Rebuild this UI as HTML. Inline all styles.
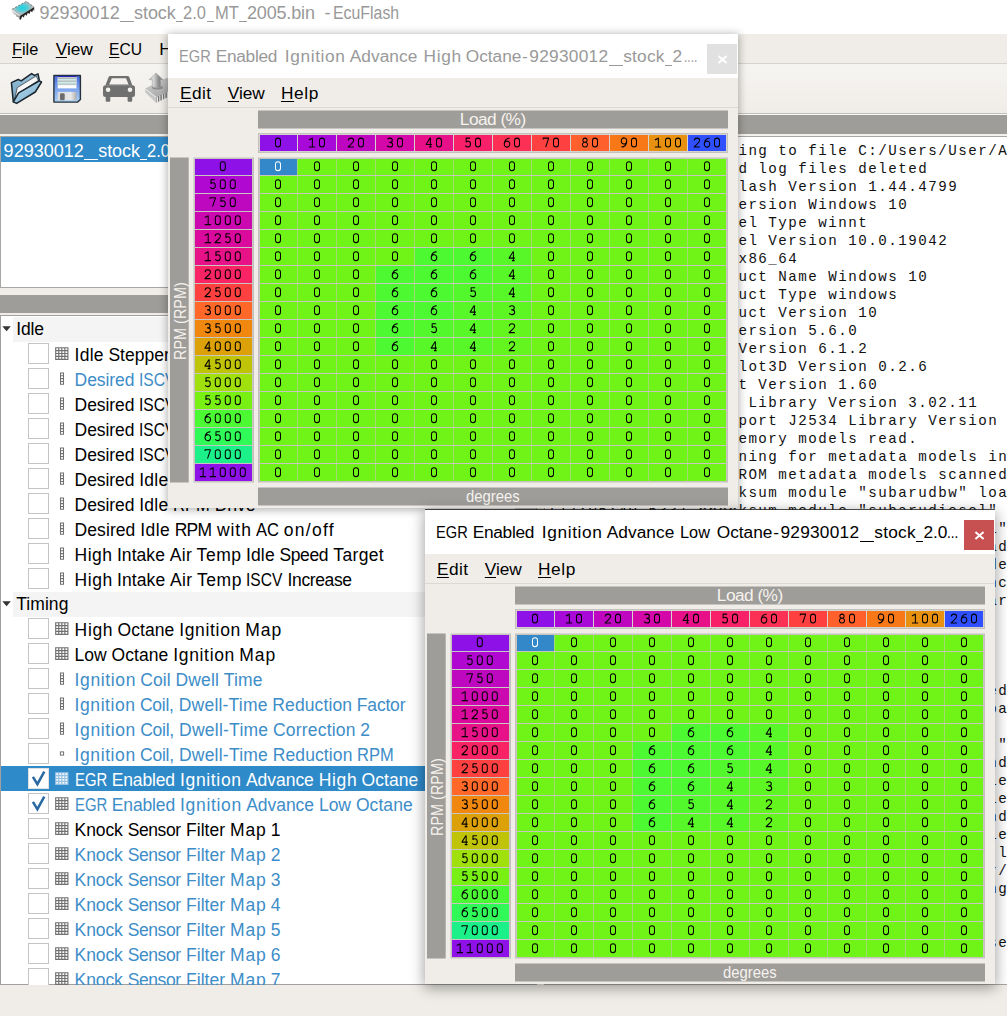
<!DOCTYPE html>
<html><head><meta charset="utf-8"><title>EcuFlash</title>
<style>
html,body{margin:0;padding:0}
body{width:1007px;height:1016px;position:relative;overflow:hidden;background:#fff;font-family:"Liberation Sans", sans-serif}
.b{position:absolute}
.x{position:absolute;white-space:pre;line-height:1}
u{text-decoration-thickness:1.2px;text-underline-offset:2px}
</style></head><body>
<svg width=0 height=0 style='position:absolute'><defs><path id='d0' d='M0,2.3A2.7,2.3 0 0 1 5.4,2.3V6.3A2.7,2.3 0 0 1 0,6.3Z' transform='translate(0.2,0) scale(0.925,1.035)'/><path id='d1' d='M-0.6,1.7L3.1,0.1V8.6M-0.6,8.6H6.1' transform='translate(0.2,0) scale(0.925,1.035)'/><path id='d2' d='M-0.2,2.4A2.9,2.4 0 0 1 5.6,2.4C5.6,4.3 2.4,5.8 -0.4,8.6H5.8' transform='translate(0.2,0) scale(0.925,1.035)'/><path id='d3' d='M-0.1,1C0.7,0.3 1.6,0 2.7,0A2.5,2.05 0 0 1 2.7,4.1H1.9M2.7,4.1A2.9,2.25 0 0 1 2.7,8.6C1.4,8.6 0.4,8.2 -0.4,7.4' transform='translate(0.2,0) scale(0.925,1.035)'/><path id='d4' d='M4.2,8.6V0H3.8L-0.4,6.2H5.8M2.6,8.6H5.6' transform='translate(0.2,0) scale(0.925,1.035)'/><path id='d5' d='M5,0H0.7V3.7C1.4,3.2 2,3 2.7,3A2.7,2.8 0 0 1 2.7,8.6C1.5,8.6 0.6,8.2 -0.2,7.4' transform='translate(0.2,0) scale(0.925,1.035)'/><path id='d6' d='M5.5,0.2C2.4,-0.3 -0.3,2.3 -0.3,5.6A3,3 0 0 0 5.7,5.9A2.9,2.6 0 0 0 -0.2,5.2' transform='translate(0.2,0) scale(0.925,1.035)'/><path id='d7' d='M-0.3,1.3V0H5.6L2.4,8.6' transform='translate(0.2,0) scale(0.925,1.035)'/><path id='d8' d='M2.7,0A2.3,2 0 1 1 2.69,0ZM2.7,4A2.75,2.3 0 1 1 2.69,4Z' transform='translate(0.2,0) scale(0.925,1.035)'/><path id='d9' d='M-0.1,8.4C3,8.9 5.7,6.3 5.7,3A3,3 0 0 0 -0.3,2.7A2.9,2.6 0 0 0 5.6,3.4' transform='translate(0.2,0) scale(0.925,1.035)'/></defs></svg>
<div class=b style='left:0px;top:34px;width:1007px;height:29px;background:#f0ede8;'></div>
<div class=b style='left:0px;top:63px;width:1007px;height:1px;background:#d6d3ce;'></div>
<div class=b style='left:0px;top:64px;width:1007px;height:49px;background:linear-gradient(#f6f4f1,#f0ede8);'></div>
<div class=b style='left:0px;top:112.5px;width:1007px;height:1px;background:#c2bfba;'></div>
<div class=b style='left:0px;top:113.5px;width:1007px;height:1.5px;background:#fbfaf8;'></div>
<div class=b style='left:0px;top:115px;width:1007px;height:18.5px;background:#9e9d99;'></div>
<div class=b style='left:0px;top:133.5px;width:1007px;height:2px;background:#f4f1ed;'></div>
<div class=b style='left:0px;top:135.5px;width:1007px;height:880.5px;background:#f0ede8;'></div>
<div class=b style='left:0px;top:135.5px;width:537px;height:152px;background:#fff;border:1px solid #a8a6a2;border-top-color:#a9a6a1;box-sizing:border-box'></div>
<div class=b style='left:1px;top:137px;width:535px;height:24.5px;background:#2f8ac9;'></div>
<div class=b style='left:0px;top:294.5px;width:537px;height:18.5px;background:#9e9d99;'></div>
<div class=b style='left:0px;top:315px;width:537px;height:670px;background:#fff;border:1px solid #a0a0a0;box-sizing:border-box'></div>
<div class=b style='left:515px;top:316px;width:21px;height:668px;background:#f0f0f0;'></div>
<div class=b style='left:515px;top:360px;width:21px;height:330px;background:#cdcdcd;'></div>
<div class=b style='left:544px;top:135.5px;width:463px;height:849.5px;background:#fff;border:1px solid #a8a6a2;border-top-color:#a9a6a1;border-right:none;box-sizing:border-box'></div>
<svg class=b style="left:8px;top:0px" width="30" height="22" viewBox="0 0 30 22">
<defs><radialGradient id="cg" cx="0.48" cy="0.45" r="0.5"><stop offset="0" stop-color="#14d6e6"/><stop offset="0.45" stop-color="#58cad6"/><stop offset="0.85" stop-color="#b4bcbc"/><stop offset="1" stop-color="#c0c0c0"/></radialGradient>
<linearGradient id="lg" x1="0" x2="1"><stop offset="0" stop-color="#e8e8e8"/><stop offset="1" stop-color="#888"/></linearGradient></defs>
<polygon points="3.7,9.5 18.4,1.2 26.2,7.1 11.7,15.9" fill="url(#cg)"/>
<polygon points="3.7,9.5 11.7,15.9 11.7,19.6 10.2,16.9 8.6,17 7.4,14.6 5.9,14.8 4.8,12.5 3.7,12.6" fill="url(#lg)"/>
<polygon points="11.7,15.9 26.2,7.1 26.2,10.9 25.2,9.6 24.2,12.3 22.6,11 21.4,14 19.8,12.7 18.6,15.7 17,14.4 15.8,17.4 14.2,16.2 13,19.4 11.7,19.8" fill="#262626"/>
<path d="M3.9,9.4 18.4,1.4 26,7.1" fill="none" stroke="#707070" stroke-width="0.9" stroke-dasharray="2.1 1.5"/>
<path d="M4.4,10.2 L11.5,15.9" stroke="#f0f0f0" stroke-width="0.9"/>
</svg>
<span class=x style='left:39.40px;top:3.66px;font-size:18px;color:#999;letter-spacing:0.029px;'>92930012</span>
<span class=x style='left:134.00px;top:3.66px;font-size:18px;color:#999;letter-spacing:-0.054px;'>stock</span>
<span class=x style='left:183.10px;top:3.66px;font-size:18px;color:#999;letter-spacing:0.000px;transform:scaleX(0.9149);transform-origin:0 0;'>2.0</span>
<span class=x style='left:215.20px;top:3.66px;font-size:18px;color:#999;letter-spacing:0.000px;transform:scaleX(0.9192);transform-origin:0 0;'>MT</span>
<span class=x style='left:246.90px;top:3.66px;font-size:18px;color:#999;letter-spacing:-0.140px;'>2005.bin</span>
<span class=x style='left:324.40px;top:3.66px;font-size:18px;color:#999;letter-spacing:0.000px;'>-</span>
<span class=x style='left:332.70px;top:3.66px;font-size:18px;color:#999;letter-spacing:0.000px;transform:scaleX(0.8821);transform-origin:0 0;'>EcuFlash</span>
<div class=b style='left:119.5px;top:20.799999999999997px;width:14.599999999999994px;height:0.9px;background:#999;'></div>
<div class=b style='left:175.5px;top:20.799999999999997px;width:7.800000000000011px;height:0.9px;background:#999;'></div>
<div class=b style='left:206.5px;top:20.799999999999997px;width:7.800000000000011px;height:0.9px;background:#999;'></div>
<div class=b style='left:239.3px;top:20.799999999999997px;width:7.699999999999989px;height:0.9px;background:#999;'></div>
<span class=x style='left:12.20px;top:40.96px;font-size:17.3px;color:#000;letter-spacing:0.000px;transform:scaleX(0.9440);transform-origin:0 0;'><u>F</u>ile</span>
<span class=x style='left:55.80px;top:40.96px;font-size:17.3px;color:#000;letter-spacing:-0.052px;'><u>V</u>iew</span>
<span class=x style='left:108.80px;top:40.96px;font-size:17.3px;color:#000;letter-spacing:0.000px;transform:scaleX(0.9041);transform-origin:0 0;'><u>E</u>CU</span>
<span class=x style='left:159.20px;top:40.96px;font-size:17.3px;color:#000;letter-spacing:0.251px;'>Help</span>
<svg class=b style="left:8px;top:70px" width="165" height="38" viewBox="8 70 165 38">
<defs>
<linearGradient id="fb" x1="0" y1="0" x2="0" y2="1"><stop offset="0" stop-color="#9cc4dc"/><stop offset="1" stop-color="#6c9cbc"/></linearGradient>
<linearGradient id="ff" x1="0" y1="0" x2="1" y2="1"><stop offset="0" stop-color="#b4d8ec"/><stop offset="1" stop-color="#7cb0d0"/></linearGradient>
<linearGradient id="fl" x1="0" y1="0" x2="0" y2="1"><stop offset="0" stop-color="#4468e0"/><stop offset="0.5" stop-color="#7ca4ec"/><stop offset="1" stop-color="#a8d0f4"/></linearGradient>
<linearGradient id="sh" x1="0" y1="0" x2="1" y2="0"><stop offset="0" stop-color="#d8d8d8"/><stop offset="0.7" stop-color="#e8e8e8"/><stop offset="1" stop-color="#b0b0b0"/></linearGradient>
<linearGradient id="ar" x1="0" y1="0" x2="1" y2="0"><stop offset="0" stop-color="#b4b4b4"/><stop offset="0.3" stop-color="#d8d8d8"/><stop offset="0.7" stop-color="#868686"/><stop offset="1" stop-color="#a4a4a4"/></linearGradient>
<linearGradient id="ch" x1="0" y1="0" x2="1" y2="1"><stop offset="0" stop-color="#d4d4d4"/><stop offset="1" stop-color="#9a9a9a"/></linearGradient>
</defs>
<!-- folder -->
<path d="M11.4,82.6 L18.2,79.5 L21.2,80.9 L31.6,73.6 L34.4,75.4 L38,73.9 L39.3,80.2 L18,94 L13.3,101.8 Z" fill="url(#fb)" stroke="#1c262e" stroke-width="1.5" stroke-linejoin="round"/>
<path d="M17.3,87.6 L36.2,75.9 L38.3,80.5 L18.6,93.2 L14.6,99.6 Z" fill="#f6f6f6" stroke="#3a4248" stroke-width="0.8" stroke-linejoin="round"/>
<path d="M13.3,101.8 L18.6,92.9 L39.4,80.8 L41.5,82 L35.3,92 L16.6,103.4 Z" fill="url(#ff)" stroke="#1c262e" stroke-width="1.5" stroke-linejoin="round"/>
<!-- floppy -->
<path d="M53.9,75.5 H80.4 V99.5 L77.7,102.1 H53.9 Z" fill="url(#fl)" stroke="#26303c" stroke-width="1.4" stroke-linejoin="round"/>
<rect x="57.7" y="76.6" width="18.8" height="11.8" fill="#fcfcfc"/>
<rect x="57.7" y="77.2" width="18.8" height="1.9" fill="#b4b8b8"/><rect x="57.7" y="80.2" width="18.8" height="1.9" fill="#b8c0c0"/><rect x="57.7" y="83.2" width="18.8" height="1.9" fill="#b8c8c8"/>
<rect x="57.7" y="79.1" width="18.8" height="1.1" fill="#c8ecec"/><rect x="57.7" y="82.1" width="18.8" height="1.1" fill="#c8ecec"/>
<rect x="57.7" y="75.9" width="18.8" height="1.1" fill="#2828b8"/>
<rect x="57.7" y="91.9" width="18.8" height="8.4" fill="url(#sh)"/>
<rect x="60" y="93.3" width="4.7" height="7" rx="1.4" fill="#6c6c6c"/>
<!-- car -->
<g fill="#707070">
<path d="M110.2,76 H127.6 Q128.8,76 129.3,77.2 L132.4,85.6 H105.4 L108.5,77.2 Q109,76 110.2,76 Z M111.8,78.2 L109.2,84.6 H128.6 L126,78.2 Z" fill-rule="evenodd"/>
<rect x="103" y="85.2" width="32" height="11.8" rx="2.5"/>
<rect x="105.7" y="95" width="4.6" height="6.7" rx="1"/>
<rect x="127.6" y="95" width="4.6" height="6.7" rx="1"/>
</g>
<circle cx="108.1" cy="89.8" r="2.3" fill="#f4f2ee"/><circle cx="130" cy="89.8" r="2.3" fill="#f4f2ee"/>
<!-- chip w/ arrow -->
<polygon points="145.1,88.5 167,77.8 178,86.4 156.1,97.1" fill="url(#ch)"/>
<polygon points="145.1,88.5 156.1,97.1 156.1,102.8 145.1,92.2" fill="#c6c6c6"/>
<path d="M145.3,88.9 L156.1,97.4" stroke="#ececec" stroke-width="1"/>
<polygon points="156.1,97.1 178,86.4 178,92 156.1,102.8" fill="#9a9a9a"/>
<path d="M157.4,97v5M159.9,95.8v5.4M162.4,94.6v5.4M164.9,93.4v5.4M167.4,92.2v5.4" stroke="#f2f2f2" stroke-width="1"/>
<path d="M158.6,96.4v5.2M161.1,95.2v5.2M163.6,94v5.2M166.1,92.8v5.2" stroke="#6e6e6e" stroke-width="0.9"/>
<ellipse cx="157.4" cy="87.6" rx="5.4" ry="2" fill="#8c8c8c"/>
<path d="M155.9,72.9 L163.4,79.9 H160.7 V86.8 Q156.6,89 152.2,86.8 V79.7 H149.1 Z" fill="url(#ar)" stroke="#9c9c9c" stroke-width="0.5"/>
</svg>
<span class=x style='left:3.60px;top:141.76px;font-size:18px;color:#fff;letter-spacing:0.029px;'>92930012</span>
<span class=x style='left:98.20px;top:141.76px;font-size:18px;color:#fff;letter-spacing:-0.054px;'>stock</span>
<span class=x style='left:147.30px;top:141.76px;font-size:18px;color:#fff;letter-spacing:0.000px;transform:scaleX(0.9149);transform-origin:0 0;'>2.0</span>
<div class=b style='left:83.7px;top:159.3px;width:14.599999999999994px;height:0.9px;background:#fff;'></div>
<div class=b style='left:139.7px;top:159.3px;width:7.800000000000011px;height:0.9px;background:#fff;'></div>
<div class=b style='left:1px;top:316px;width:514px;height:668.5px;overflow:hidden'><div class=b style='left:-1px;top:-316px'>
<div class=b style='left:13px;top:316.5px;width:502px;height:25px;background:#f4f4f4;'></div>
<svg class=b style='left:2px;top:325.5px' width=10 height=6><polygon points='0.3,0.3 8.8,0.3 4.55,5.3' fill='#333'/></svg>
<span class=x style='left:16.20px;top:321.29px;font-size:17.5px;color:#000;letter-spacing:-0.140px;'>Idle</span>
<div class=b style='left:28.2px;top:343.3px;width:20.6px;height:20.6px;background:#fff;border:1px solid #c4c4c4;box-sizing:border-box'></div>
<svg class=b style='left:55px;top:347.0px' width=14 height=14><path d='M0.7,0.7h12.2v11.6h-12.2z M3.75,0.7v11.6 M6.8,0.7v11.6 M9.85,0.7v11.6 M0.7,3.6h12.2 M0.7,6.5h12.2 M0.7,9.4h12.2' fill='#fff' stroke='#707070' stroke-width='1.15'/></svg>
<span class=x style='left:74.60px;top:346.69px;font-size:17.5px;color:#000;letter-spacing:0.227px;'>Idle</span>
<span class=x style='left:108.39px;top:346.69px;font-size:17.5px;color:#000;letter-spacing:0.018px;'>Stepper</span>
<span class=x style='left:174.68px;top:346.69px;font-size:17.5px;color:#000;letter-spacing:1.111px;'>Motor</span>
<span class=x style='left:228.75px;top:346.69px;font-size:17.5px;color:#000;letter-spacing:-0.455px;'>Steps</span>
<div class=b style='left:28.2px;top:368.3px;width:20.6px;height:20.6px;background:#fff;border:1px solid #c4c4c4;box-sizing:border-box'></div>
<svg class=b style='left:59px;top:372.0px' width=6 height=14><path d='M1.5,0.9h3v11.4h-3z M1.5,3.75h3 M1.5,6.6h3 M1.5,9.45h3' fill='#fff' stroke='#707070' stroke-width='1.05'/></svg>
<span class=x style='left:74.60px;top:371.69px;font-size:17.5px;color:#3d8dc8;letter-spacing:-0.089px;'>Desired</span>
<span class=x style='left:139.27px;top:371.69px;font-size:17.5px;color:#3d8dc8;letter-spacing:0.000px;transform:scaleX(0.8903);transform-origin:0 0;'>ISCV</span>
<span class=x style='left:180.54px;top:371.69px;font-size:17.5px;color:#3d8dc8;letter-spacing:0.429px;'>Duty</span>
<span class=x style='left:222.70px;top:371.69px;font-size:17.5px;color:#3d8dc8;letter-spacing:0.000px;'>A</span>
<div class=b style='left:28.2px;top:393.3px;width:20.6px;height:20.6px;background:#fff;border:1px solid #c4c4c4;box-sizing:border-box'></div>
<svg class=b style='left:59px;top:397.0px' width=6 height=14><path d='M1.5,0.9h3v11.4h-3z M1.5,3.75h3 M1.5,6.6h3 M1.5,9.45h3' fill='#fff' stroke='#707070' stroke-width='1.05'/></svg>
<span class=x style='left:74.60px;top:396.69px;font-size:17.5px;color:#000;letter-spacing:-0.089px;'>Desired</span>
<span class=x style='left:139.27px;top:396.69px;font-size:17.5px;color:#000;letter-spacing:0.000px;transform:scaleX(0.8903);transform-origin:0 0;'>ISCV</span>
<span class=x style='left:180.54px;top:396.69px;font-size:17.5px;color:#000;letter-spacing:0.429px;'>Duty</span>
<span class=x style='left:222.70px;top:396.69px;font-size:17.5px;color:#000;letter-spacing:0.000px;'>B</span>
<div class=b style='left:28.2px;top:418.3px;width:20.6px;height:20.6px;background:#fff;border:1px solid #c4c4c4;box-sizing:border-box'></div>
<svg class=b style='left:59px;top:422.0px' width=6 height=14><path d='M1.5,0.9h3v11.4h-3z M1.5,3.75h3 M1.5,6.6h3 M1.5,9.45h3' fill='#fff' stroke='#707070' stroke-width='1.05'/></svg>
<span class=x style='left:74.60px;top:421.69px;font-size:17.5px;color:#000;letter-spacing:-0.089px;'>Desired</span>
<span class=x style='left:139.27px;top:421.69px;font-size:17.5px;color:#000;letter-spacing:0.000px;transform:scaleX(0.8903);transform-origin:0 0;'>ISCV</span>
<span class=x style='left:180.54px;top:421.69px;font-size:17.5px;color:#000;letter-spacing:0.429px;'>Duty</span>
<span class=x style='left:222.70px;top:421.69px;font-size:17.5px;color:#000;letter-spacing:0.000px;'>C</span>
<div class=b style='left:28.2px;top:443.3px;width:20.6px;height:20.6px;background:#fff;border:1px solid #c4c4c4;box-sizing:border-box'></div>
<svg class=b style='left:59px;top:447.0px' width=6 height=14><path d='M1.5,0.9h3v11.4h-3z M1.5,3.75h3 M1.5,6.6h3 M1.5,9.45h3' fill='#fff' stroke='#707070' stroke-width='1.05'/></svg>
<span class=x style='left:74.60px;top:446.69px;font-size:17.5px;color:#000;letter-spacing:-0.089px;'>Desired</span>
<span class=x style='left:139.27px;top:446.69px;font-size:17.5px;color:#000;letter-spacing:0.000px;transform:scaleX(0.8903);transform-origin:0 0;'>ISCV</span>
<span class=x style='left:180.54px;top:446.69px;font-size:17.5px;color:#000;letter-spacing:0.429px;'>Duty</span>
<span class=x style='left:222.70px;top:446.69px;font-size:17.5px;color:#000;letter-spacing:0.000px;'>D</span>
<div class=b style='left:28.2px;top:468.3px;width:20.6px;height:20.6px;background:#fff;border:1px solid #c4c4c4;box-sizing:border-box'></div>
<svg class=b style='left:59px;top:472.0px' width=6 height=14><path d='M1.5,0.9h3v11.4h-3z M1.5,3.75h3 M1.5,6.6h3 M1.5,9.45h3' fill='#fff' stroke='#707070' stroke-width='1.05'/></svg>
<span class=x style='left:74.60px;top:471.69px;font-size:17.5px;color:#000;letter-spacing:-0.089px;'>Desired</span>
<span class=x style='left:139.27px;top:471.69px;font-size:17.5px;color:#000;letter-spacing:0.227px;'>Idle</span>
<span class=x style='left:173.06px;top:471.69px;font-size:17.5px;color:#000;letter-spacing:0.000px;transform:scaleX(0.9437);transform-origin:0 0;'>RPM</span>
<span class=x style='left:214.65px;top:471.69px;font-size:17.5px;color:#000;letter-spacing:0.339px;'>Neutral</span>
<div class=b style='left:28.2px;top:493.3px;width:20.6px;height:20.6px;background:#fff;border:1px solid #c4c4c4;box-sizing:border-box'></div>
<svg class=b style='left:59px;top:497.0px' width=6 height=14><path d='M1.5,0.9h3v11.4h-3z M1.5,3.75h3 M1.5,6.6h3 M1.5,9.45h3' fill='#fff' stroke='#707070' stroke-width='1.05'/></svg>
<span class=x style='left:74.60px;top:496.69px;font-size:17.5px;color:#000;letter-spacing:-0.089px;'>Desired</span>
<span class=x style='left:139.27px;top:496.69px;font-size:17.5px;color:#000;letter-spacing:0.227px;'>Idle</span>
<span class=x style='left:173.06px;top:496.69px;font-size:17.5px;color:#000;letter-spacing:0.000px;transform:scaleX(0.9437);transform-origin:0 0;'>RPM</span>
<span class=x style='left:214.65px;top:496.69px;font-size:17.5px;color:#000;letter-spacing:0.022px;'>Drive</span>
<div class=b style='left:28.2px;top:518.3px;width:20.6px;height:20.6px;background:#fff;border:1px solid #c4c4c4;box-sizing:border-box'></div>
<svg class=b style='left:59px;top:522.0px' width=6 height=14><path d='M1.5,0.9h3v11.4h-3z M1.5,3.75h3 M1.5,6.6h3 M1.5,9.45h3' fill='#fff' stroke='#707070' stroke-width='1.05'/></svg>
<span class=x style='left:74.60px;top:521.69px;font-size:17.5px;color:#000;letter-spacing:0.076px;'>Desired</span>
<span class=x style='left:140.34px;top:521.69px;font-size:17.5px;color:#000;letter-spacing:0.386px;'>Idle</span>
<span class=x style='left:174.69px;top:521.69px;font-size:17.5px;color:#000;letter-spacing:-0.792px;'>RPM</span>
<span class=x style='left:216.97px;top:521.69px;font-size:17.5px;color:#000;letter-spacing:0.930px;'>with</span>
<span class=x style='left:255.86px;top:521.69px;font-size:17.5px;color:#000;letter-spacing:0.000px;transform:scaleX(0.9434);transform-origin:0 0;'>AC</span>
<span class=x style='left:283.76px;top:521.69px;font-size:17.5px;color:#000;letter-spacing:1.294px;'>on/off</span>
<div class=b style='left:28.2px;top:543.3px;width:20.6px;height:20.6px;background:#fff;border:1px solid #c4c4c4;box-sizing:border-box'></div>
<svg class=b style='left:59px;top:547.0px' width=6 height=14><path d='M1.5,0.9h3v11.4h-3z M1.5,3.75h3 M1.5,6.6h3 M1.5,9.45h3' fill='#fff' stroke='#707070' stroke-width='1.05'/></svg>
<span class=x style='left:74.60px;top:546.69px;font-size:17.5px;color:#000;letter-spacing:0.481px;'>High</span>
<span class=x style='left:116.92px;top:546.69px;font-size:17.5px;color:#000;letter-spacing:0.064px;'>Intake</span>
<span class=x style='left:169.79px;top:546.69px;font-size:17.5px;color:#000;letter-spacing:0.284px;'>Air</span>
<span class=x style='left:196.62px;top:546.69px;font-size:17.5px;color:#000;letter-spacing:0.533px;'>Temp</span>
<span class=x style='left:245.89px;top:546.69px;font-size:17.5px;color:#000;letter-spacing:0.189px;'>Idle</span>
<span class=x style='left:279.55px;top:546.69px;font-size:17.5px;color:#000;letter-spacing:-0.415px;'>Speed</span>
<span class=x style='left:333.37px;top:546.69px;font-size:17.5px;color:#000;letter-spacing:0.339px;'>Target</span>
<div class=b style='left:28.2px;top:568.3px;width:20.6px;height:20.6px;background:#fff;border:1px solid #c4c4c4;box-sizing:border-box'></div>
<svg class=b style='left:59px;top:572.0px' width=6 height=14><path d='M1.5,0.9h3v11.4h-3z M1.5,3.75h3 M1.5,6.6h3 M1.5,9.45h3' fill='#fff' stroke='#707070' stroke-width='1.05'/></svg>
<span class=x style='left:74.60px;top:571.69px;font-size:17.5px;color:#000;letter-spacing:0.514px;'>High</span>
<span class=x style='left:117.03px;top:571.69px;font-size:17.5px;color:#000;letter-spacing:0.089px;'>Intake</span>
<span class=x style='left:170.04px;top:571.69px;font-size:17.5px;color:#000;letter-spacing:0.312px;'>Air</span>
<span class=x style='left:196.94px;top:571.69px;font-size:17.5px;color:#000;letter-spacing:0.572px;'>Temp</span>
<span class=x style='left:246.34px;top:571.69px;font-size:17.5px;color:#000;letter-spacing:0.000px;transform:scaleX(0.8891);transform-origin:0 0;'>ISCV</span>
<span class=x style='left:287.55px;top:571.69px;font-size:17.5px;color:#000;letter-spacing:-0.368px;'>Increase</span>
<div class=b style='left:13px;top:591.5px;width:502px;height:25px;background:#f4f4f4;'></div>
<svg class=b style='left:2px;top:600.5px' width=10 height=6><polygon points='0.3,0.3 8.8,0.3 4.55,5.3' fill='#333'/></svg>
<span class=x style='left:16.20px;top:596.29px;font-size:17.5px;color:#000;letter-spacing:0.068px;'>Timing</span>
<div class=b style='left:28.2px;top:618.3px;width:20.6px;height:20.6px;background:#fff;border:1px solid #c4c4c4;box-sizing:border-box'></div>
<svg class=b style='left:55px;top:622.0px' width=14 height=14><path d='M0.7,0.7h12.2v11.6h-12.2z M3.75,0.7v11.6 M6.8,0.7v11.6 M9.85,0.7v11.6 M0.7,3.6h12.2 M0.7,6.5h12.2 M0.7,9.4h12.2' fill='#fff' stroke='#707070' stroke-width='1.15'/></svg>
<span class=x style='left:74.60px;top:621.69px;font-size:17.5px;color:#000;letter-spacing:0.645px;'>High</span>
<span class=x style='left:117.47px;top:621.69px;font-size:17.5px;color:#000;letter-spacing:0.071px;'>Octane</span>
<span class=x style='left:179.20px;top:621.69px;font-size:17.5px;color:#000;letter-spacing:0.671px;'>Ignition</span>
<span class=x style='left:245.27px;top:621.69px;font-size:17.5px;color:#000;letter-spacing:0.944px;'>Map</span>
<div class=b style='left:28.2px;top:643.3px;width:20.6px;height:20.6px;background:#fff;border:1px solid #c4c4c4;box-sizing:border-box'></div>
<svg class=b style='left:55px;top:647.0px' width=14 height=14><path d='M0.7,0.7h12.2v11.6h-12.2z M3.75,0.7v11.6 M6.8,0.7v11.6 M9.85,0.7v11.6 M0.7,3.6h12.2 M0.7,6.5h12.2 M0.7,9.4h12.2' fill='#fff' stroke='#707070' stroke-width='1.15'/></svg>
<span class=x style='left:74.60px;top:646.69px;font-size:17.5px;color:#000;letter-spacing:-0.049px;'>Low</span>
<span class=x style='left:111.54px;top:646.69px;font-size:17.5px;color:#000;letter-spacing:0.066px;'>Octane</span>
<span class=x style='left:173.24px;top:646.69px;font-size:17.5px;color:#000;letter-spacing:0.667px;'>Ignition</span>
<span class=x style='left:239.28px;top:646.69px;font-size:17.5px;color:#000;letter-spacing:0.936px;'>Map</span>
<div class=b style='left:28.2px;top:668.3px;width:20.6px;height:20.6px;background:#fff;border:1px solid #c4c4c4;box-sizing:border-box'></div>
<svg class=b style='left:59px;top:672.0px' width=6 height=14><path d='M1.5,0.9h3v11.4h-3z M1.5,3.75h3 M1.5,6.6h3 M1.5,9.45h3' fill='#fff' stroke='#707070' stroke-width='1.05'/></svg>
<span class=x style='left:74.60px;top:671.69px;font-size:17.5px;color:#3d8dc8;letter-spacing:0.622px;'>Ignition</span>
<span class=x style='left:140.30px;top:671.69px;font-size:17.5px;color:#3d8dc8;letter-spacing:0.026px;'>Coil</span>
<span class=x style='left:175.44px;top:671.69px;font-size:17.5px;color:#3d8dc8;letter-spacing:0.182px;'>Dwell</span>
<span class=x style='left:223.87px;top:671.69px;font-size:17.5px;color:#3d8dc8;letter-spacing:0.092px;'>Time</span>
<div class=b style='left:28.2px;top:693.3px;width:20.6px;height:20.6px;background:#fff;border:1px solid #c4c4c4;box-sizing:border-box'></div>
<svg class=b style='left:59px;top:697.0px' width=6 height=14><path d='M1.5,0.9h3v11.4h-3z M1.5,3.75h3 M1.5,6.6h3 M1.5,9.45h3' fill='#fff' stroke='#707070' stroke-width='1.05'/></svg>
<span class=x style='left:74.60px;top:696.69px;font-size:17.5px;color:#3d8dc8;letter-spacing:0.574px;'>Ignition</span>
<span class=x style='left:139.94px;top:696.69px;font-size:17.5px;color:#3d8dc8;letter-spacing:-0.270px;'>Coil,</span>
<span class=x style='left:178.75px;top:696.69px;font-size:17.5px;color:#3d8dc8;letter-spacing:0.208px;'>Dwell-Time</span>
<span class=x style='left:272.36px;top:696.69px;font-size:17.5px;color:#3d8dc8;letter-spacing:0.099px;'>Reduction</span>
<span class=x style='left:356.85px;top:696.69px;font-size:17.5px;color:#3d8dc8;letter-spacing:-0.192px;'>Factor</span>
<div class=b style='left:28.2px;top:718.3px;width:20.6px;height:20.6px;background:#fff;border:1px solid #c4c4c4;box-sizing:border-box'></div>
<svg class=b style='left:59px;top:722.0px' width=6 height=14><path d='M1.5,0.9h3v11.4h-3z M1.5,3.75h3 M1.5,6.6h3 M1.5,9.45h3' fill='#fff' stroke='#707070' stroke-width='1.05'/></svg>
<span class=x style='left:74.60px;top:721.69px;font-size:17.5px;color:#3d8dc8;letter-spacing:0.601px;'>Ignition</span>
<span class=x style='left:140.14px;top:721.69px;font-size:17.5px;color:#3d8dc8;letter-spacing:-0.244px;'>Coil,</span>
<span class=x style='left:179.08px;top:721.69px;font-size:17.5px;color:#3d8dc8;letter-spacing:0.238px;'>Dwell-Time</span>
<span class=x style='left:272.97px;top:721.69px;font-size:17.5px;color:#3d8dc8;letter-spacing:0.196px;'>Correction</span>
<span class=x style='left:360.37px;top:721.69px;font-size:17.5px;color:#3d8dc8;letter-spacing:0.000px;'>2</span>
<div class=b style='left:28.2px;top:743.3px;width:20.6px;height:20.6px;background:#fff;border:1px solid #c4c4c4;box-sizing:border-box'></div>
<svg class=b style='left:59px;top:750.5px' width=6 height=6><rect x='1.4' y='0.9' width='3.2' height='3.2' fill='#fff' stroke='#707070' stroke-width='1'/></svg>
<span class=x style='left:74.60px;top:746.69px;font-size:17.5px;color:#3d8dc8;letter-spacing:0.589px;'>Ignition</span>
<span class=x style='left:140.05px;top:746.69px;font-size:17.5px;color:#3d8dc8;letter-spacing:-0.256px;'>Coil,</span>
<span class=x style='left:178.93px;top:746.69px;font-size:17.5px;color:#3d8dc8;letter-spacing:0.224px;'>Dwell-Time</span>
<span class=x style='left:272.69px;top:746.69px;font-size:17.5px;color:#3d8dc8;letter-spacing:0.116px;'>Reduction</span>
<span class=x style='left:357.32px;top:746.69px;font-size:17.5px;color:#3d8dc8;letter-spacing:0.000px;transform:scaleX(0.9433);transform-origin:0 0;'>RPM</span>
<div class=b style='left:1px;top:766.25px;width:514px;height:24.25px;background:#2f8ac9;'></div>
<div class=b style='left:28.2px;top:768.3px;width:20.6px;height:20.6px;background:#fff;border:1px solid #e0e0e0;box-sizing:border-box'></div>
<svg class=b style='left:28px;top:768.0px' width=21 height=21><path d='M4.9,8.8 L9.4,16.2 L16.3,3.6' fill='none' stroke='#2a6aa2' stroke-width='2.5'/></svg>
<svg class=b style='left:55px;top:772.0px' width=14 height=14><path d='M0.7,0.7h12.2v11.6h-12.2z M3.75,0.7v11.6 M6.8,0.7v11.6 M9.85,0.7v11.6 M0.7,3.6h12.2 M0.7,6.5h12.2 M0.7,9.4h12.2' fill='#f4f8fc' stroke='#94c0e2' stroke-width='1.15'/></svg>
<span class=x style='left:74.60px;top:771.69px;font-size:17.5px;color:#fff;letter-spacing:0.000px;transform:scaleX(0.8487);transform-origin:0 0;'>EGR</span>
<span class=x style='left:111.73px;top:771.69px;font-size:17.5px;color:#fff;letter-spacing:-0.147px;'>Enabled</span>
<span class=x style='left:180.01px;top:771.69px;font-size:17.5px;color:#fff;letter-spacing:0.659px;'>Ignition</span>
<span class=x style='left:245.99px;top:771.69px;font-size:17.5px;color:#fff;letter-spacing:-0.043px;'>Advance</span>
<span class=x style='left:318.77px;top:771.69px;font-size:17.5px;color:#fff;letter-spacing:0.628px;'>High</span>
<span class=x style='left:361.58px;top:771.69px;font-size:17.5px;color:#fff;letter-spacing:0.056px;'>Octane</span>
<div class=b style='left:28.2px;top:793.3px;width:20.6px;height:20.6px;background:#fff;border:1px solid #c4c4c4;box-sizing:border-box'></div>
<svg class=b style='left:28px;top:793.0px' width=21 height=21><path d='M4.9,8.8 L9.4,16.2 L16.3,3.6' fill='none' stroke='#2a6aa2' stroke-width='2.5'/></svg>
<svg class=b style='left:55px;top:797.0px' width=14 height=14><path d='M0.7,0.7h12.2v11.6h-12.2z M3.75,0.7v11.6 M6.8,0.7v11.6 M9.85,0.7v11.6 M0.7,3.6h12.2 M0.7,6.5h12.2 M0.7,9.4h12.2' fill='#fff' stroke='#707070' stroke-width='1.15'/></svg>
<span class=x style='left:74.60px;top:796.69px;font-size:17.5px;color:#3d8dc8;letter-spacing:0.000px;transform:scaleX(0.8495);transform-origin:0 0;'>EGR</span>
<span class=x style='left:111.76px;top:796.69px;font-size:17.5px;color:#3d8dc8;letter-spacing:-0.137px;'>Enabled</span>
<span class=x style='left:180.10px;top:796.69px;font-size:17.5px;color:#3d8dc8;letter-spacing:0.667px;'>Ignition</span>
<span class=x style='left:246.14px;top:796.69px;font-size:17.5px;color:#3d8dc8;letter-spacing:-0.033px;'>Advance</span>
<span class=x style='left:318.99px;top:796.69px;font-size:17.5px;color:#3d8dc8;letter-spacing:-0.049px;'>Low</span>
<span class=x style='left:355.93px;top:796.69px;font-size:17.5px;color:#3d8dc8;letter-spacing:0.066px;'>Octane</span>
<div class=b style='left:28.2px;top:818.3px;width:20.6px;height:20.6px;background:#fff;border:1px solid #c4c4c4;box-sizing:border-box'></div>
<svg class=b style='left:55px;top:822.0px' width=14 height=14><path d='M0.7,0.7h12.2v11.6h-12.2z M3.75,0.7v11.6 M6.8,0.7v11.6 M9.85,0.7v11.6 M0.7,3.6h12.2 M0.7,6.5h12.2 M0.7,9.4h12.2' fill='#fff' stroke='#707070' stroke-width='1.15'/></svg>
<span class=x style='left:74.60px;top:821.69px;font-size:17.5px;color:#000;letter-spacing:-0.103px;'>Knock</span>
<span class=x style='left:127.74px;top:821.69px;font-size:17.5px;color:#000;letter-spacing:-0.416px;'>Sensor</span>
<span class=x style='left:186.02px;top:821.69px;font-size:17.5px;color:#000;letter-spacing:0.046px;'>Filter</span>
<span class=x style='left:230.06px;top:821.69px;font-size:17.5px;color:#000;letter-spacing:0.860px;'>Map</span>
<span class=x style='left:270.74px;top:821.69px;font-size:17.5px;color:#000;letter-spacing:0.000px;'>1</span>
<div class=b style='left:28.2px;top:843.3px;width:20.6px;height:20.6px;background:#fff;border:1px solid #c4c4c4;box-sizing:border-box'></div>
<svg class=b style='left:55px;top:847.0px' width=14 height=14><path d='M0.7,0.7h12.2v11.6h-12.2z M3.75,0.7v11.6 M6.8,0.7v11.6 M9.85,0.7v11.6 M0.7,3.6h12.2 M0.7,6.5h12.2 M0.7,9.4h12.2' fill='#fff' stroke='#707070' stroke-width='1.15'/></svg>
<span class=x style='left:74.60px;top:846.69px;font-size:17.5px;color:#3d8dc8;letter-spacing:-0.103px;'>Knock</span>
<span class=x style='left:127.74px;top:846.69px;font-size:17.5px;color:#3d8dc8;letter-spacing:-0.416px;'>Sensor</span>
<span class=x style='left:186.02px;top:846.69px;font-size:17.5px;color:#3d8dc8;letter-spacing:0.046px;'>Filter</span>
<span class=x style='left:230.06px;top:846.69px;font-size:17.5px;color:#3d8dc8;letter-spacing:0.860px;'>Map</span>
<span class=x style='left:270.74px;top:846.69px;font-size:17.5px;color:#3d8dc8;letter-spacing:0.000px;'>2</span>
<div class=b style='left:28.2px;top:868.3px;width:20.6px;height:20.6px;background:#fff;border:1px solid #c4c4c4;box-sizing:border-box'></div>
<svg class=b style='left:55px;top:872.0px' width=14 height=14><path d='M0.7,0.7h12.2v11.6h-12.2z M3.75,0.7v11.6 M6.8,0.7v11.6 M9.85,0.7v11.6 M0.7,3.6h12.2 M0.7,6.5h12.2 M0.7,9.4h12.2' fill='#fff' stroke='#707070' stroke-width='1.15'/></svg>
<span class=x style='left:74.60px;top:871.69px;font-size:17.5px;color:#3d8dc8;letter-spacing:-0.103px;'>Knock</span>
<span class=x style='left:127.74px;top:871.69px;font-size:17.5px;color:#3d8dc8;letter-spacing:-0.416px;'>Sensor</span>
<span class=x style='left:186.02px;top:871.69px;font-size:17.5px;color:#3d8dc8;letter-spacing:0.046px;'>Filter</span>
<span class=x style='left:230.06px;top:871.69px;font-size:17.5px;color:#3d8dc8;letter-spacing:0.860px;'>Map</span>
<span class=x style='left:270.74px;top:871.69px;font-size:17.5px;color:#3d8dc8;letter-spacing:0.000px;'>3</span>
<div class=b style='left:28.2px;top:893.3px;width:20.6px;height:20.6px;background:#fff;border:1px solid #c4c4c4;box-sizing:border-box'></div>
<svg class=b style='left:55px;top:897.0px' width=14 height=14><path d='M0.7,0.7h12.2v11.6h-12.2z M3.75,0.7v11.6 M6.8,0.7v11.6 M9.85,0.7v11.6 M0.7,3.6h12.2 M0.7,6.5h12.2 M0.7,9.4h12.2' fill='#fff' stroke='#707070' stroke-width='1.15'/></svg>
<span class=x style='left:74.60px;top:896.69px;font-size:17.5px;color:#3d8dc8;letter-spacing:-0.103px;'>Knock</span>
<span class=x style='left:127.74px;top:896.69px;font-size:17.5px;color:#3d8dc8;letter-spacing:-0.416px;'>Sensor</span>
<span class=x style='left:186.02px;top:896.69px;font-size:17.5px;color:#3d8dc8;letter-spacing:0.046px;'>Filter</span>
<span class=x style='left:230.06px;top:896.69px;font-size:17.5px;color:#3d8dc8;letter-spacing:0.860px;'>Map</span>
<span class=x style='left:270.74px;top:896.69px;font-size:17.5px;color:#3d8dc8;letter-spacing:0.000px;'>4</span>
<div class=b style='left:28.2px;top:918.3px;width:20.6px;height:20.6px;background:#fff;border:1px solid #c4c4c4;box-sizing:border-box'></div>
<svg class=b style='left:55px;top:922.0px' width=14 height=14><path d='M0.7,0.7h12.2v11.6h-12.2z M3.75,0.7v11.6 M6.8,0.7v11.6 M9.85,0.7v11.6 M0.7,3.6h12.2 M0.7,6.5h12.2 M0.7,9.4h12.2' fill='#fff' stroke='#707070' stroke-width='1.15'/></svg>
<span class=x style='left:74.60px;top:921.69px;font-size:17.5px;color:#3d8dc8;letter-spacing:-0.103px;'>Knock</span>
<span class=x style='left:127.74px;top:921.69px;font-size:17.5px;color:#3d8dc8;letter-spacing:-0.416px;'>Sensor</span>
<span class=x style='left:186.02px;top:921.69px;font-size:17.5px;color:#3d8dc8;letter-spacing:0.046px;'>Filter</span>
<span class=x style='left:230.06px;top:921.69px;font-size:17.5px;color:#3d8dc8;letter-spacing:0.860px;'>Map</span>
<span class=x style='left:270.74px;top:921.69px;font-size:17.5px;color:#3d8dc8;letter-spacing:0.000px;'>5</span>
<div class=b style='left:28.2px;top:943.3px;width:20.6px;height:20.6px;background:#fff;border:1px solid #c4c4c4;box-sizing:border-box'></div>
<svg class=b style='left:55px;top:947.0px' width=14 height=14><path d='M0.7,0.7h12.2v11.6h-12.2z M3.75,0.7v11.6 M6.8,0.7v11.6 M9.85,0.7v11.6 M0.7,3.6h12.2 M0.7,6.5h12.2 M0.7,9.4h12.2' fill='#fff' stroke='#707070' stroke-width='1.15'/></svg>
<span class=x style='left:74.60px;top:946.69px;font-size:17.5px;color:#3d8dc8;letter-spacing:-0.103px;'>Knock</span>
<span class=x style='left:127.74px;top:946.69px;font-size:17.5px;color:#3d8dc8;letter-spacing:-0.416px;'>Sensor</span>
<span class=x style='left:186.02px;top:946.69px;font-size:17.5px;color:#3d8dc8;letter-spacing:0.046px;'>Filter</span>
<span class=x style='left:230.06px;top:946.69px;font-size:17.5px;color:#3d8dc8;letter-spacing:0.860px;'>Map</span>
<span class=x style='left:270.74px;top:946.69px;font-size:17.5px;color:#3d8dc8;letter-spacing:0.000px;'>6</span>
<div class=b style='left:28.2px;top:968.3px;width:20.6px;height:20.6px;background:#fff;border:1px solid #c4c4c4;box-sizing:border-box'></div>
<svg class=b style='left:55px;top:972.0px' width=14 height=14><path d='M0.7,0.7h12.2v11.6h-12.2z M3.75,0.7v11.6 M6.8,0.7v11.6 M9.85,0.7v11.6 M0.7,3.6h12.2 M0.7,6.5h12.2 M0.7,9.4h12.2' fill='#fff' stroke='#707070' stroke-width='1.15'/></svg>
<span class=x style='left:74.60px;top:971.69px;font-size:17.5px;color:#3d8dc8;letter-spacing:-0.103px;'>Knock</span>
<span class=x style='left:127.74px;top:971.69px;font-size:17.5px;color:#3d8dc8;letter-spacing:-0.416px;'>Sensor</span>
<span class=x style='left:186.02px;top:971.69px;font-size:17.5px;color:#3d8dc8;letter-spacing:0.046px;'>Filter</span>
<span class=x style='left:230.06px;top:971.69px;font-size:17.5px;color:#3d8dc8;letter-spacing:0.860px;'>Map</span>
<span class=x style='left:270.74px;top:971.69px;font-size:17.5px;color:#3d8dc8;letter-spacing:0.000px;'>7</span>
</div></div>
<div class=b style='left:545px;top:136px;width:462px;height:848px;overflow:hidden;font-family:"Liberation Mono", monospace;font-size:14.2px;letter-spacing:1.48px;line-height:18px;color:#111;white-space:pre'><div style='position:absolute;left:3.5px;top:6.199999999999999px'>[17:05:40.533] Logging to file C:/Users/User/AppData/Roaming/OpenECU/EcuFlash/logs
[17:05:40.533] 5 old log files deleted
[17:05:40.533] EcuFlash Version 1.44.4799
[17:05:40.533] OS Version Windows 10
[17:05:40.533] Kernel Type winnt
[17:05:40.533] Kernel Version 10.0.19042
[17:05:40.533] CPU x86_64
[17:05:40.533] Product Name Windows 10
[17:05:40.533] Product Type windows
[17:05:40.533] Product Version 10
[17:05:40.533] Qt Version 5.6.0
[17:05:40.533] Qwt Version 6.1.2
[17:05:40.533] QwtPlot3D Version 0.2.6
[17:05:40.533] Boost Version 1.60
[17:05:40.533] FTDI Library Version 3.02.11
[17:05:40.533] Openport J2534 Library Version 1.02.4798
[17:05:40.533] 72 memory models read.
[17:05:40.533] scanning for metadata models in C:/Program Files (x86)/OpenECU
[17:05:40.533] 735 ROM metadata models scanned.
[17:05:40.533] checksum module &quot;subarudbw&quot; loaded.
[17:05:40.533] checksum module &quot;subarudiesel&quot; loaded.
[17:05:40.533] checksum module &quot;subaruhitachi&quot; loaded.
[17:05:40.533] checksum module &quot;mitsucan&quot; loaded.
[17:05:40.533] checksum module &quot;mitsuh8&quot; loaded.
[17:05:40.533] patch module &quot;Subaru CAN Enhanced RAM Parameter Logging&quot; loaded.
[17:05:40.533] patch module &quot;Mitsu CAN RAM Parameter Logging&quot; loaded.
[17:05:40.533] 
[17:05:40.533] 
[17:05:40.533] 
[17:05:40.533] 
[17:05:40.533]                              ed
[17:05:40.533]                              pa
[17:05:40.533]                              . 
[17:05:40.533]                              .&quot;
[17:05:40.533]                              nd
[17:05:40.533]                              le
[17:05:40.533]                              le
[17:05:40.533]                              nd
[17:05:40.533]                              le
[17:05:40.533]                               l
[17:05:40.533]                              r/
[17:05:40.533]                              ng
[17:05:40.533]                                
[17:05:40.533]                              : 
[17:05:40.533]                              se
[17:05:40.533]                                
[17:05:40.533]                                </div></div>
<div class=b style='left:425px;top:508.8px;width:570px;height:0.8px;background:rgba(30,30,30,0.75);'></div>
<div class=b style='left:168px;top:33.5px;width:570px;height:474px;background:#f0ede8;box-shadow:0 1px 8px 1px rgba(0,0,0,0.30)'></div>
<div class=b style='left:168px;top:33.5px;width:570px;height:44.5px;background:#fff;'></div>
<div class=b style='left:168px;top:106.7px;width:570px;height:1px;background:#dcd9d4;'></div>
<span class=x style='left:179.30px;top:48.06px;font-size:17.3px;color:#999;letter-spacing:0.000px;transform:scaleX(0.8464);transform-origin:0 0;'>EGR</span>
<span class=x style='left:215.70px;top:48.06px;font-size:17.3px;color:#999;letter-spacing:-0.287px;'>Enabled</span>
<span class=x style='left:284.70px;top:48.06px;font-size:17.3px;color:#999;letter-spacing:0.652px;'>Ignition</span>
<span class=x style='left:349.80px;top:48.06px;font-size:17.3px;color:#999;letter-spacing:0.039px;'>Advance</span>
<span class=x style='left:423.60px;top:48.06px;font-size:17.3px;color:#999;letter-spacing:0.618px;'>High</span>
<span class=x style='left:465.70px;top:48.06px;font-size:17.3px;color:#999;letter-spacing:-0.004px;'>Octane</span>
<span class=x style='left:522.10px;top:48.06px;font-size:17.3px;color:#999;letter-spacing:0.000px;'>-</span>
<span class=x style='left:529.30px;top:48.06px;font-size:17.3px;color:#999;letter-spacing:0.258px;'>92930012</span>
<span class=x style='left:623.20px;top:48.06px;font-size:17.3px;color:#999;letter-spacing:0.239px;'>stock</span>
<span class=x style='left:672.50px;top:48.06px;font-size:17.3px;color:#999;letter-spacing:0.000px;'>2</span>
<span class=x style='left:683.90px;top:48.06px;font-size:17.3px;color:#999;letter-spacing:0.000px;transform:scaleX(0.7024);transform-origin:0 0;'>....</span>
<div class=b style='left:608.6px;top:64.60000000000001px;width:14.600000000000023px;height:0.9px;background:#999;'></div>
<div class=b style='left:664.5px;top:64.60000000000001px;width:7.600000000000023px;height:0.9px;background:#999;'></div>
<div class=b style='left:707px;top:44.0px;width:30px;height:30px;background:#e1e1e1;'></div>
<svg class=b style='left:707px;top:44.0px' width=30 height=30><path d='M11.4,11.9 L19.6,18.9 M19.6,11.9 L11.4,18.9' stroke='#fff' stroke-width='2' fill='none'/></svg>
<span class=x style='left:179.90px;top:85.36px;font-size:17.3px;color:#000;letter-spacing:0.473px;'><u>E</u>dit</span>
<span class=x style='left:227.80px;top:85.36px;font-size:17.3px;color:#000;letter-spacing:-0.052px;'><u>V</u>iew</span>
<span class=x style='left:281.00px;top:85.36px;font-size:17.3px;color:#000;letter-spacing:0.618px;'><u>H</u>elp</span>
<svg class=b style='left:168px;top:33.0px' width=570 height=475 viewBox='0 -0.5 570 475' shape-rendering='crispEdges'><rect x=90 y=77 width=470 height=18 fill='#9e9d99' shape-rendering='auto'/><rect x=90 y=454 width=470 height=18 fill='#9e9d99' shape-rendering='auto'/><rect x=2 y=124 width=18.7 height=325 fill='#9e9d99' shape-rendering='auto'/><g shape-rendering='auto'><rect x=90 y=99.5 width=470 height=20 fill='#c4c1bc'/><rect x=91 y=100.5 width=468 height=18 fill='#d6d3ce'/><rect x=25.5 y=124 width=60.5 height=325 fill='#c4c1bc'/><rect x=26.5 y=125 width=58.5 height=323 fill='#c9c6c1'/><rect x=90 y=124 width=470 height=325 fill='#c4c1bc'/><rect x=91 y=125 width=468 height=323 fill='#c9c6c1'/></g><rect x=92 y=101.5 width=37 height=16 fill='rgb(142,18,232)'/><rect x=130 y=101.5 width=38 height=16 fill='rgb(168,8,216)'/><rect x=169 y=101.5 width=38 height=16 fill='rgb(190,6,192)'/><rect x=208 y=101.5 width=38 height=16 fill='rgb(212,8,168)'/><rect x=247 y=101.5 width=38 height=16 fill='rgb(232,16,136)'/><rect x=286 y=101.5 width=38 height=16 fill='rgb(248,32,104)'/><rect x=325 y=101.5 width=38 height=16 fill='rgb(252,48,84)'/><rect x=364 y=101.5 width=38 height=16 fill='rgb(255,64,64)'/><rect x=403 y=101.5 width=38 height=16 fill='rgb(255,96,44)'/><rect x=442 y=101.5 width=38 height=16 fill='rgb(248,120,24)'/><rect x=481 y=101.5 width=38 height=16 fill='rgb(232,144,16)'/><rect x=520 y=101.5 width=38 height=16 fill='rgb(48,80,255)'/><rect x=27 y=125.5 width=57 height=16 fill='rgb(142,18,232)'/><rect x=27 y=142.5 width=57 height=17 fill='rgb(176,8,208)'/><rect x=27 y=160.5 width=57 height=17 fill='rgb(190,8,192)'/><rect x=27 y=178.5 width=57 height=17 fill='rgb(204,8,176)'/><rect x=27 y=196.5 width=57 height=17 fill='rgb(218,10,156)'/><rect x=27 y=214.5 width=57 height=17 fill='rgb(232,18,136)'/><rect x=27 y=232.5 width=57 height=17 fill='rgb(250,36,100)'/><rect x=27 y=250.5 width=57 height=17 fill='rgb(255,64,64)'/><rect x=27 y=268.5 width=57 height=17 fill='rgb(255,104,40)'/><rect x=27 y=286.5 width=57 height=17 fill='rgb(240,136,16)'/><rect x=27 y=304.5 width=57 height=17 fill='rgb(220,160,8)'/><rect x=27 y=322.5 width=57 height=17 fill='rgb(192,196,8)'/><rect x=27 y=340.5 width=57 height=17 fill='rgb(160,224,12)'/><rect x=27 y=358.5 width=57 height=17 fill='rgb(120,240,20)'/><rect x=27 y=376.5 width=57 height=17 fill='rgb(76,250,52)'/><rect x=27 y=394.5 width=57 height=17 fill='rgb(48,250,88)'/><rect x=27 y=412.5 width=57 height=17 fill='rgb(28,240,136)'/><rect x=27 y=430.5 width=57 height=17 fill='rgb(142,18,232)'/><rect x=92 y=125.5 width=466 height=16 fill='rgb(112,243,22)'/><rect x=92 y=125.5 width=37 height=16 fill='rgb(50,136,200)'/><rect x=92 y=142.5 width=466 height=17 fill='rgb(112,243,22)'/><rect x=92 y=160.5 width=466 height=17 fill='rgb(112,243,22)'/><rect x=92 y=178.5 width=466 height=17 fill='rgb(112,243,22)'/><rect x=92 y=196.5 width=466 height=17 fill='rgb(112,243,22)'/><rect x=92 y=214.5 width=466 height=17 fill='rgb(112,243,22)'/><rect x=247 y=214.5 width=38 height=17 fill='rgb(77,249,48)'/><rect x=286 y=214.5 width=38 height=17 fill='rgb(77,249,48)'/><rect x=325 y=214.5 width=38 height=17 fill='rgb(88,247,40)'/><rect x=92 y=232.5 width=466 height=17 fill='rgb(112,243,22)'/><rect x=208 y=232.5 width=38 height=17 fill='rgb(77,249,48)'/><rect x=247 y=232.5 width=38 height=17 fill='rgb(77,249,48)'/><rect x=286 y=232.5 width=38 height=17 fill='rgb(77,249,48)'/><rect x=325 y=232.5 width=38 height=17 fill='rgb(88,247,40)'/><rect x=92 y=250.5 width=466 height=17 fill='rgb(112,243,22)'/><rect x=208 y=250.5 width=38 height=17 fill='rgb(77,249,48)'/><rect x=247 y=250.5 width=38 height=17 fill='rgb(77,249,48)'/><rect x=286 y=250.5 width=38 height=17 fill='rgb(82,248,44)'/><rect x=325 y=250.5 width=38 height=17 fill='rgb(88,247,40)'/><rect x=92 y=268.5 width=466 height=17 fill='rgb(112,243,22)'/><rect x=208 y=268.5 width=38 height=17 fill='rgb(77,249,48)'/><rect x=247 y=268.5 width=38 height=17 fill='rgb(77,249,48)'/><rect x=286 y=268.5 width=38 height=17 fill='rgb(88,247,40)'/><rect x=325 y=268.5 width=38 height=17 fill='rgb(94,246,34)'/><rect x=92 y=286.5 width=466 height=17 fill='rgb(112,243,22)'/><rect x=208 y=286.5 width=38 height=17 fill='rgb(77,249,48)'/><rect x=247 y=286.5 width=38 height=17 fill='rgb(82,248,44)'/><rect x=286 y=286.5 width=38 height=17 fill='rgb(88,247,40)'/><rect x=325 y=286.5 width=38 height=17 fill='rgb(100,245,30)'/><rect x=92 y=304.5 width=466 height=17 fill='rgb(112,243,22)'/><rect x=208 y=304.5 width=38 height=17 fill='rgb(77,249,48)'/><rect x=247 y=304.5 width=38 height=17 fill='rgb(88,247,40)'/><rect x=286 y=304.5 width=38 height=17 fill='rgb(88,247,40)'/><rect x=325 y=304.5 width=38 height=17 fill='rgb(100,245,30)'/><rect x=92 y=322.5 width=466 height=17 fill='rgb(112,243,22)'/><rect x=92 y=340.5 width=466 height=17 fill='rgb(112,243,22)'/><rect x=92 y=358.5 width=466 height=17 fill='rgb(112,243,22)'/><rect x=92 y=376.5 width=466 height=17 fill='rgb(112,243,22)'/><rect x=92 y=394.5 width=466 height=17 fill='rgb(112,243,22)'/><rect x=92 y=412.5 width=466 height=17 fill='rgb(112,243,22)'/><rect x=92 y=430.5 width=466 height=17 fill='rgb(112,243,22)'/><rect x=129 y=125.5 width=1 height=322 fill='#c9c6c1' fill-opacity='0.55'/><rect x=168 y=125.5 width=1 height=322 fill='#c9c6c1' fill-opacity='0.55'/><rect x=207 y=125.5 width=1 height=322 fill='#c9c6c1' fill-opacity='0.55'/><rect x=246 y=125.5 width=1 height=322 fill='#c9c6c1' fill-opacity='0.55'/><rect x=285 y=125.5 width=1 height=322 fill='#c9c6c1' fill-opacity='0.55'/><rect x=324 y=125.5 width=1 height=322 fill='#c9c6c1' fill-opacity='0.55'/><rect x=363 y=125.5 width=1 height=322 fill='#c9c6c1' fill-opacity='0.55'/><rect x=402 y=125.5 width=1 height=322 fill='#c9c6c1' fill-opacity='0.55'/><rect x=441 y=125.5 width=1 height=322 fill='#c9c6c1' fill-opacity='0.55'/><rect x=480 y=125.5 width=1 height=322 fill='#c9c6c1' fill-opacity='0.55'/><rect x=519 y=125.5 width=1 height=322 fill='#c9c6c1' fill-opacity='0.55'/></svg>
<span class=x style='left:459.80px;top:111.26px;font-size:17.3px;color:#f6f2ee;letter-spacing:-0.532px;'>Load (%)</span>
<span class=x style='left:466.15px;top:487.96px;font-size:17.3px;color:#f6f2ee;letter-spacing:0.000px;transform:scaleX(0.8598);transform-origin:0 0;'>degrees</span>
<span class=x style='left:172.2px;top:359.7px;font-size:17.3px;color:#f6f2ee;transform-origin:0 0;transform:rotate(-90deg) scaleX(0.835)'>RPM (RPM)</span>
<svg class=b style='left:168px;top:33.0px' width=570 height=475 viewBox='0 -0.5 570 475'><g fill='none' stroke='#000' stroke-width='1.1' stroke-linejoin='round'><use href='#d0' x='107.30' y='104.60'/><use href='#d1' x='141.30' y='104.60'/><use href='#d0' x='151.30' y='104.60'/><use href='#d2' x='180.30' y='104.60'/><use href='#d0' x='190.30' y='104.60'/><use href='#d3' x='219.30' y='104.60'/><use href='#d0' x='229.30' y='104.60'/><use href='#d4' x='258.30' y='104.60'/><use href='#d0' x='268.30' y='104.60'/><use href='#d5' x='297.30' y='104.60'/><use href='#d0' x='307.30' y='104.60'/><use href='#d6' x='336.30' y='104.60'/><use href='#d0' x='346.30' y='104.60'/><use href='#d7' x='375.30' y='104.60'/><use href='#d0' x='385.30' y='104.60'/><use href='#d8' x='414.30' y='104.60'/><use href='#d0' x='424.30' y='104.60'/><use href='#d9' x='453.30' y='104.60'/><use href='#d0' x='463.30' y='104.60'/><use href='#d1' x='487.30' y='104.60'/><use href='#d0' x='497.30' y='104.60'/><use href='#d0' x='507.30' y='104.60'/><use href='#d2' x='526.30' y='104.60'/><use href='#d6' x='536.30' y='104.60'/><use href='#d0' x='546.30' y='104.60'/><use href='#d0' x='52.10' y='128.20'/><use href='#d0' x='107.30' y='128.20' stroke='#fff'/><use href='#d0' x='146.30' y='128.20'/><use href='#d0' x='185.30' y='128.20'/><use href='#d0' x='224.30' y='128.20'/><use href='#d0' x='263.30' y='128.20'/><use href='#d0' x='302.30' y='128.20'/><use href='#d0' x='341.30' y='128.20'/><use href='#d0' x='380.30' y='128.20'/><use href='#d0' x='419.30' y='128.20'/><use href='#d0' x='458.30' y='128.20'/><use href='#d0' x='497.30' y='128.20'/><use href='#d0' x='536.30' y='128.20'/><use href='#d5' x='42.10' y='146.20'/><use href='#d0' x='52.10' y='146.20'/><use href='#d0' x='62.10' y='146.20'/><use href='#d0' x='107.30' y='146.20'/><use href='#d0' x='146.30' y='146.20'/><use href='#d0' x='185.30' y='146.20'/><use href='#d0' x='224.30' y='146.20'/><use href='#d0' x='263.30' y='146.20'/><use href='#d0' x='302.30' y='146.20'/><use href='#d0' x='341.30' y='146.20'/><use href='#d0' x='380.30' y='146.20'/><use href='#d0' x='419.30' y='146.20'/><use href='#d0' x='458.30' y='146.20'/><use href='#d0' x='497.30' y='146.20'/><use href='#d0' x='536.30' y='146.20'/><use href='#d7' x='42.10' y='164.20'/><use href='#d5' x='52.10' y='164.20'/><use href='#d0' x='62.10' y='164.20'/><use href='#d0' x='107.30' y='164.20'/><use href='#d0' x='146.30' y='164.20'/><use href='#d0' x='185.30' y='164.20'/><use href='#d0' x='224.30' y='164.20'/><use href='#d0' x='263.30' y='164.20'/><use href='#d0' x='302.30' y='164.20'/><use href='#d0' x='341.30' y='164.20'/><use href='#d0' x='380.30' y='164.20'/><use href='#d0' x='419.30' y='164.20'/><use href='#d0' x='458.30' y='164.20'/><use href='#d0' x='497.30' y='164.20'/><use href='#d0' x='536.30' y='164.20'/><use href='#d1' x='37.10' y='182.20'/><use href='#d0' x='47.10' y='182.20'/><use href='#d0' x='57.10' y='182.20'/><use href='#d0' x='67.10' y='182.20'/><use href='#d0' x='107.30' y='182.20'/><use href='#d0' x='146.30' y='182.20'/><use href='#d0' x='185.30' y='182.20'/><use href='#d0' x='224.30' y='182.20'/><use href='#d0' x='263.30' y='182.20'/><use href='#d0' x='302.30' y='182.20'/><use href='#d0' x='341.30' y='182.20'/><use href='#d0' x='380.30' y='182.20'/><use href='#d0' x='419.30' y='182.20'/><use href='#d0' x='458.30' y='182.20'/><use href='#d0' x='497.30' y='182.20'/><use href='#d0' x='536.30' y='182.20'/><use href='#d1' x='37.10' y='200.20'/><use href='#d2' x='47.10' y='200.20'/><use href='#d5' x='57.10' y='200.20'/><use href='#d0' x='67.10' y='200.20'/><use href='#d0' x='107.30' y='200.20'/><use href='#d0' x='146.30' y='200.20'/><use href='#d0' x='185.30' y='200.20'/><use href='#d0' x='224.30' y='200.20'/><use href='#d0' x='263.30' y='200.20'/><use href='#d0' x='302.30' y='200.20'/><use href='#d0' x='341.30' y='200.20'/><use href='#d0' x='380.30' y='200.20'/><use href='#d0' x='419.30' y='200.20'/><use href='#d0' x='458.30' y='200.20'/><use href='#d0' x='497.30' y='200.20'/><use href='#d0' x='536.30' y='200.20'/><use href='#d1' x='37.10' y='218.20'/><use href='#d5' x='47.10' y='218.20'/><use href='#d0' x='57.10' y='218.20'/><use href='#d0' x='67.10' y='218.20'/><use href='#d0' x='107.30' y='218.20'/><use href='#d0' x='146.30' y='218.20'/><use href='#d0' x='185.30' y='218.20'/><use href='#d0' x='224.30' y='218.20'/><use href='#d6' x='263.30' y='218.20'/><use href='#d6' x='302.30' y='218.20'/><use href='#d4' x='341.30' y='218.20'/><use href='#d0' x='380.30' y='218.20'/><use href='#d0' x='419.30' y='218.20'/><use href='#d0' x='458.30' y='218.20'/><use href='#d0' x='497.30' y='218.20'/><use href='#d0' x='536.30' y='218.20'/><use href='#d2' x='37.10' y='236.20'/><use href='#d0' x='47.10' y='236.20'/><use href='#d0' x='57.10' y='236.20'/><use href='#d0' x='67.10' y='236.20'/><use href='#d0' x='107.30' y='236.20'/><use href='#d0' x='146.30' y='236.20'/><use href='#d0' x='185.30' y='236.20'/><use href='#d6' x='224.30' y='236.20'/><use href='#d6' x='263.30' y='236.20'/><use href='#d6' x='302.30' y='236.20'/><use href='#d4' x='341.30' y='236.20'/><use href='#d0' x='380.30' y='236.20'/><use href='#d0' x='419.30' y='236.20'/><use href='#d0' x='458.30' y='236.20'/><use href='#d0' x='497.30' y='236.20'/><use href='#d0' x='536.30' y='236.20'/><use href='#d2' x='37.10' y='254.20'/><use href='#d5' x='47.10' y='254.20'/><use href='#d0' x='57.10' y='254.20'/><use href='#d0' x='67.10' y='254.20'/><use href='#d0' x='107.30' y='254.20'/><use href='#d0' x='146.30' y='254.20'/><use href='#d0' x='185.30' y='254.20'/><use href='#d6' x='224.30' y='254.20'/><use href='#d6' x='263.30' y='254.20'/><use href='#d5' x='302.30' y='254.20'/><use href='#d4' x='341.30' y='254.20'/><use href='#d0' x='380.30' y='254.20'/><use href='#d0' x='419.30' y='254.20'/><use href='#d0' x='458.30' y='254.20'/><use href='#d0' x='497.30' y='254.20'/><use href='#d0' x='536.30' y='254.20'/><use href='#d3' x='37.10' y='272.20'/><use href='#d0' x='47.10' y='272.20'/><use href='#d0' x='57.10' y='272.20'/><use href='#d0' x='67.10' y='272.20'/><use href='#d0' x='107.30' y='272.20'/><use href='#d0' x='146.30' y='272.20'/><use href='#d0' x='185.30' y='272.20'/><use href='#d6' x='224.30' y='272.20'/><use href='#d6' x='263.30' y='272.20'/><use href='#d4' x='302.30' y='272.20'/><use href='#d3' x='341.30' y='272.20'/><use href='#d0' x='380.30' y='272.20'/><use href='#d0' x='419.30' y='272.20'/><use href='#d0' x='458.30' y='272.20'/><use href='#d0' x='497.30' y='272.20'/><use href='#d0' x='536.30' y='272.20'/><use href='#d3' x='37.10' y='290.20'/><use href='#d5' x='47.10' y='290.20'/><use href='#d0' x='57.10' y='290.20'/><use href='#d0' x='67.10' y='290.20'/><use href='#d0' x='107.30' y='290.20'/><use href='#d0' x='146.30' y='290.20'/><use href='#d0' x='185.30' y='290.20'/><use href='#d6' x='224.30' y='290.20'/><use href='#d5' x='263.30' y='290.20'/><use href='#d4' x='302.30' y='290.20'/><use href='#d2' x='341.30' y='290.20'/><use href='#d0' x='380.30' y='290.20'/><use href='#d0' x='419.30' y='290.20'/><use href='#d0' x='458.30' y='290.20'/><use href='#d0' x='497.30' y='290.20'/><use href='#d0' x='536.30' y='290.20'/><use href='#d4' x='37.10' y='308.20'/><use href='#d0' x='47.10' y='308.20'/><use href='#d0' x='57.10' y='308.20'/><use href='#d0' x='67.10' y='308.20'/><use href='#d0' x='107.30' y='308.20'/><use href='#d0' x='146.30' y='308.20'/><use href='#d0' x='185.30' y='308.20'/><use href='#d6' x='224.30' y='308.20'/><use href='#d4' x='263.30' y='308.20'/><use href='#d4' x='302.30' y='308.20'/><use href='#d2' x='341.30' y='308.20'/><use href='#d0' x='380.30' y='308.20'/><use href='#d0' x='419.30' y='308.20'/><use href='#d0' x='458.30' y='308.20'/><use href='#d0' x='497.30' y='308.20'/><use href='#d0' x='536.30' y='308.20'/><use href='#d4' x='37.10' y='326.20'/><use href='#d5' x='47.10' y='326.20'/><use href='#d0' x='57.10' y='326.20'/><use href='#d0' x='67.10' y='326.20'/><use href='#d0' x='107.30' y='326.20'/><use href='#d0' x='146.30' y='326.20'/><use href='#d0' x='185.30' y='326.20'/><use href='#d0' x='224.30' y='326.20'/><use href='#d0' x='263.30' y='326.20'/><use href='#d0' x='302.30' y='326.20'/><use href='#d0' x='341.30' y='326.20'/><use href='#d0' x='380.30' y='326.20'/><use href='#d0' x='419.30' y='326.20'/><use href='#d0' x='458.30' y='326.20'/><use href='#d0' x='497.30' y='326.20'/><use href='#d0' x='536.30' y='326.20'/><use href='#d5' x='37.10' y='344.20'/><use href='#d0' x='47.10' y='344.20'/><use href='#d0' x='57.10' y='344.20'/><use href='#d0' x='67.10' y='344.20'/><use href='#d0' x='107.30' y='344.20'/><use href='#d0' x='146.30' y='344.20'/><use href='#d0' x='185.30' y='344.20'/><use href='#d0' x='224.30' y='344.20'/><use href='#d0' x='263.30' y='344.20'/><use href='#d0' x='302.30' y='344.20'/><use href='#d0' x='341.30' y='344.20'/><use href='#d0' x='380.30' y='344.20'/><use href='#d0' x='419.30' y='344.20'/><use href='#d0' x='458.30' y='344.20'/><use href='#d0' x='497.30' y='344.20'/><use href='#d0' x='536.30' y='344.20'/><use href='#d5' x='37.10' y='362.20'/><use href='#d5' x='47.10' y='362.20'/><use href='#d0' x='57.10' y='362.20'/><use href='#d0' x='67.10' y='362.20'/><use href='#d0' x='107.30' y='362.20'/><use href='#d0' x='146.30' y='362.20'/><use href='#d0' x='185.30' y='362.20'/><use href='#d0' x='224.30' y='362.20'/><use href='#d0' x='263.30' y='362.20'/><use href='#d0' x='302.30' y='362.20'/><use href='#d0' x='341.30' y='362.20'/><use href='#d0' x='380.30' y='362.20'/><use href='#d0' x='419.30' y='362.20'/><use href='#d0' x='458.30' y='362.20'/><use href='#d0' x='497.30' y='362.20'/><use href='#d0' x='536.30' y='362.20'/><use href='#d6' x='37.10' y='380.20'/><use href='#d0' x='47.10' y='380.20'/><use href='#d0' x='57.10' y='380.20'/><use href='#d0' x='67.10' y='380.20'/><use href='#d0' x='107.30' y='380.20'/><use href='#d0' x='146.30' y='380.20'/><use href='#d0' x='185.30' y='380.20'/><use href='#d0' x='224.30' y='380.20'/><use href='#d0' x='263.30' y='380.20'/><use href='#d0' x='302.30' y='380.20'/><use href='#d0' x='341.30' y='380.20'/><use href='#d0' x='380.30' y='380.20'/><use href='#d0' x='419.30' y='380.20'/><use href='#d0' x='458.30' y='380.20'/><use href='#d0' x='497.30' y='380.20'/><use href='#d0' x='536.30' y='380.20'/><use href='#d6' x='37.10' y='398.20'/><use href='#d5' x='47.10' y='398.20'/><use href='#d0' x='57.10' y='398.20'/><use href='#d0' x='67.10' y='398.20'/><use href='#d0' x='107.30' y='398.20'/><use href='#d0' x='146.30' y='398.20'/><use href='#d0' x='185.30' y='398.20'/><use href='#d0' x='224.30' y='398.20'/><use href='#d0' x='263.30' y='398.20'/><use href='#d0' x='302.30' y='398.20'/><use href='#d0' x='341.30' y='398.20'/><use href='#d0' x='380.30' y='398.20'/><use href='#d0' x='419.30' y='398.20'/><use href='#d0' x='458.30' y='398.20'/><use href='#d0' x='497.30' y='398.20'/><use href='#d0' x='536.30' y='398.20'/><use href='#d7' x='37.10' y='416.20'/><use href='#d0' x='47.10' y='416.20'/><use href='#d0' x='57.10' y='416.20'/><use href='#d0' x='67.10' y='416.20'/><use href='#d0' x='107.30' y='416.20'/><use href='#d0' x='146.30' y='416.20'/><use href='#d0' x='185.30' y='416.20'/><use href='#d0' x='224.30' y='416.20'/><use href='#d0' x='263.30' y='416.20'/><use href='#d0' x='302.30' y='416.20'/><use href='#d0' x='341.30' y='416.20'/><use href='#d0' x='380.30' y='416.20'/><use href='#d0' x='419.30' y='416.20'/><use href='#d0' x='458.30' y='416.20'/><use href='#d0' x='497.30' y='416.20'/><use href='#d0' x='536.30' y='416.20'/><use href='#d1' x='32.10' y='434.20'/><use href='#d1' x='42.10' y='434.20'/><use href='#d0' x='52.10' y='434.20'/><use href='#d0' x='62.10' y='434.20'/><use href='#d0' x='72.10' y='434.20'/><use href='#d0' x='107.30' y='434.20'/><use href='#d0' x='146.30' y='434.20'/><use href='#d0' x='185.30' y='434.20'/><use href='#d0' x='224.30' y='434.20'/><use href='#d0' x='263.30' y='434.20'/><use href='#d0' x='302.30' y='434.20'/><use href='#d0' x='341.30' y='434.20'/><use href='#d0' x='380.30' y='434.20'/><use href='#d0' x='419.30' y='434.20'/><use href='#d0' x='458.30' y='434.20'/><use href='#d0' x='497.30' y='434.20'/><use href='#d0' x='536.30' y='434.20'/></g></svg>
<div class=b style='left:425px;top:509.5px;width:570px;height:474px;background:#f0ede8;box-shadow:0 3px 13px 1px rgba(0,0,0,0.37)'></div>
<div class=b style='left:425px;top:509.5px;width:570px;height:44.5px;background:#fff;'></div>
<div class=b style='left:425px;top:582.7px;width:570px;height:1px;background:#dcd9d4;'></div>
<span class=x style='left:436.30px;top:524.06px;font-size:17.3px;color:#000;letter-spacing:0.000px;transform:scaleX(0.8464);transform-origin:0 0;'>EGR</span>
<span class=x style='left:472.70px;top:524.06px;font-size:17.3px;color:#000;letter-spacing:-0.287px;'>Enabled</span>
<span class=x style='left:541.70px;top:524.06px;font-size:17.3px;color:#000;letter-spacing:0.652px;'>Ignition</span>
<span class=x style='left:606.80px;top:524.06px;font-size:17.3px;color:#000;letter-spacing:0.039px;'>Advance</span>
<span class=x style='left:680.40px;top:524.06px;font-size:17.3px;color:#000;letter-spacing:0.000px;transform:scaleX(0.9431);transform-origin:0 0;'>Low</span>
<span class=x style='left:716.80px;top:524.06px;font-size:17.3px;color:#000;letter-spacing:-0.024px;'>Octane</span>
<span class=x style='left:773.20px;top:524.06px;font-size:17.3px;color:#000;letter-spacing:0.000px;'>-</span>
<span class=x style='left:780.40px;top:524.06px;font-size:17.3px;color:#000;letter-spacing:0.258px;'>92930012</span>
<span class=x style='left:874.30px;top:524.06px;font-size:17.3px;color:#000;letter-spacing:0.239px;'>stock</span>
<span class=x style='left:923.50px;top:524.06px;font-size:17.3px;color:#000;letter-spacing:-0.066px;'>2.0</span>
<span class=x style='left:947.40px;top:524.06px;font-size:17.3px;color:#000;letter-spacing:0.000px;transform:scaleX(0.7913);transform-origin:0 0;'>...</span>
<div class=b style='left:859.6px;top:540.6px;width:14.799999999999955px;height:0.9px;background:#000;'></div>
<div class=b style='left:915.7px;top:540.6px;width:7.5px;height:0.9px;background:#000;'></div>
<div class=b style='left:964px;top:520.0px;width:30px;height:30px;background:#c75050;'></div>
<svg class=b style='left:964px;top:520.0px' width=30 height=30><path d='M11.4,11.9 L19.6,18.9 M19.6,11.9 L11.4,18.9' stroke='#fff' stroke-width='2' fill='none'/></svg>
<span class=x style='left:436.90px;top:561.36px;font-size:17.3px;color:#000;letter-spacing:0.473px;'><u>E</u>dit</span>
<span class=x style='left:484.80px;top:561.36px;font-size:17.3px;color:#000;letter-spacing:-0.052px;'><u>V</u>iew</span>
<span class=x style='left:538.00px;top:561.36px;font-size:17.3px;color:#000;letter-spacing:0.618px;'><u>H</u>elp</span>
<svg class=b style='left:425px;top:509.0px' width=570 height=475 viewBox='0 -0.5 570 475' shape-rendering='crispEdges'><rect x=90 y=77 width=470 height=18 fill='#9e9d99' shape-rendering='auto'/><rect x=90 y=454 width=470 height=18 fill='#9e9d99' shape-rendering='auto'/><rect x=2 y=124 width=18.7 height=325 fill='#9e9d99' shape-rendering='auto'/><g shape-rendering='auto'><rect x=90 y=99.5 width=470 height=20 fill='#c4c1bc'/><rect x=91 y=100.5 width=468 height=18 fill='#d6d3ce'/><rect x=25.5 y=124 width=60.5 height=325 fill='#c4c1bc'/><rect x=26.5 y=125 width=58.5 height=323 fill='#c9c6c1'/><rect x=90 y=124 width=470 height=325 fill='#c4c1bc'/><rect x=91 y=125 width=468 height=323 fill='#c9c6c1'/></g><rect x=92 y=101.5 width=37 height=16 fill='rgb(142,18,232)'/><rect x=130 y=101.5 width=38 height=16 fill='rgb(168,8,216)'/><rect x=169 y=101.5 width=38 height=16 fill='rgb(190,6,192)'/><rect x=208 y=101.5 width=38 height=16 fill='rgb(212,8,168)'/><rect x=247 y=101.5 width=38 height=16 fill='rgb(232,16,136)'/><rect x=286 y=101.5 width=38 height=16 fill='rgb(248,32,104)'/><rect x=325 y=101.5 width=38 height=16 fill='rgb(252,48,84)'/><rect x=364 y=101.5 width=38 height=16 fill='rgb(255,64,64)'/><rect x=403 y=101.5 width=38 height=16 fill='rgb(255,96,44)'/><rect x=442 y=101.5 width=38 height=16 fill='rgb(248,120,24)'/><rect x=481 y=101.5 width=38 height=16 fill='rgb(232,144,16)'/><rect x=520 y=101.5 width=38 height=16 fill='rgb(48,80,255)'/><rect x=27 y=125.5 width=57 height=16 fill='rgb(142,18,232)'/><rect x=27 y=142.5 width=57 height=17 fill='rgb(176,8,208)'/><rect x=27 y=160.5 width=57 height=17 fill='rgb(190,8,192)'/><rect x=27 y=178.5 width=57 height=17 fill='rgb(204,8,176)'/><rect x=27 y=196.5 width=57 height=17 fill='rgb(218,10,156)'/><rect x=27 y=214.5 width=57 height=17 fill='rgb(232,18,136)'/><rect x=27 y=232.5 width=57 height=17 fill='rgb(250,36,100)'/><rect x=27 y=250.5 width=57 height=17 fill='rgb(255,64,64)'/><rect x=27 y=268.5 width=57 height=17 fill='rgb(255,104,40)'/><rect x=27 y=286.5 width=57 height=17 fill='rgb(240,136,16)'/><rect x=27 y=304.5 width=57 height=17 fill='rgb(220,160,8)'/><rect x=27 y=322.5 width=57 height=17 fill='rgb(192,196,8)'/><rect x=27 y=340.5 width=57 height=17 fill='rgb(160,224,12)'/><rect x=27 y=358.5 width=57 height=17 fill='rgb(120,240,20)'/><rect x=27 y=376.5 width=57 height=17 fill='rgb(76,250,52)'/><rect x=27 y=394.5 width=57 height=17 fill='rgb(48,250,88)'/><rect x=27 y=412.5 width=57 height=17 fill='rgb(28,240,136)'/><rect x=27 y=430.5 width=57 height=17 fill='rgb(142,18,232)'/><rect x=92 y=125.5 width=466 height=16 fill='rgb(112,243,22)'/><rect x=92 y=125.5 width=37 height=16 fill='rgb(50,136,200)'/><rect x=92 y=142.5 width=466 height=17 fill='rgb(112,243,22)'/><rect x=92 y=160.5 width=466 height=17 fill='rgb(112,243,22)'/><rect x=92 y=178.5 width=466 height=17 fill='rgb(112,243,22)'/><rect x=92 y=196.5 width=466 height=17 fill='rgb(112,243,22)'/><rect x=92 y=214.5 width=466 height=17 fill='rgb(112,243,22)'/><rect x=247 y=214.5 width=38 height=17 fill='rgb(77,249,48)'/><rect x=286 y=214.5 width=38 height=17 fill='rgb(77,249,48)'/><rect x=325 y=214.5 width=38 height=17 fill='rgb(88,247,40)'/><rect x=92 y=232.5 width=466 height=17 fill='rgb(112,243,22)'/><rect x=208 y=232.5 width=38 height=17 fill='rgb(77,249,48)'/><rect x=247 y=232.5 width=38 height=17 fill='rgb(77,249,48)'/><rect x=286 y=232.5 width=38 height=17 fill='rgb(77,249,48)'/><rect x=325 y=232.5 width=38 height=17 fill='rgb(88,247,40)'/><rect x=92 y=250.5 width=466 height=17 fill='rgb(112,243,22)'/><rect x=208 y=250.5 width=38 height=17 fill='rgb(77,249,48)'/><rect x=247 y=250.5 width=38 height=17 fill='rgb(77,249,48)'/><rect x=286 y=250.5 width=38 height=17 fill='rgb(82,248,44)'/><rect x=325 y=250.5 width=38 height=17 fill='rgb(88,247,40)'/><rect x=92 y=268.5 width=466 height=17 fill='rgb(112,243,22)'/><rect x=208 y=268.5 width=38 height=17 fill='rgb(77,249,48)'/><rect x=247 y=268.5 width=38 height=17 fill='rgb(77,249,48)'/><rect x=286 y=268.5 width=38 height=17 fill='rgb(88,247,40)'/><rect x=325 y=268.5 width=38 height=17 fill='rgb(94,246,34)'/><rect x=92 y=286.5 width=466 height=17 fill='rgb(112,243,22)'/><rect x=208 y=286.5 width=38 height=17 fill='rgb(77,249,48)'/><rect x=247 y=286.5 width=38 height=17 fill='rgb(82,248,44)'/><rect x=286 y=286.5 width=38 height=17 fill='rgb(88,247,40)'/><rect x=325 y=286.5 width=38 height=17 fill='rgb(100,245,30)'/><rect x=92 y=304.5 width=466 height=17 fill='rgb(112,243,22)'/><rect x=208 y=304.5 width=38 height=17 fill='rgb(77,249,48)'/><rect x=247 y=304.5 width=38 height=17 fill='rgb(88,247,40)'/><rect x=286 y=304.5 width=38 height=17 fill='rgb(88,247,40)'/><rect x=325 y=304.5 width=38 height=17 fill='rgb(100,245,30)'/><rect x=92 y=322.5 width=466 height=17 fill='rgb(112,243,22)'/><rect x=92 y=340.5 width=466 height=17 fill='rgb(112,243,22)'/><rect x=92 y=358.5 width=466 height=17 fill='rgb(112,243,22)'/><rect x=92 y=376.5 width=466 height=17 fill='rgb(112,243,22)'/><rect x=92 y=394.5 width=466 height=17 fill='rgb(112,243,22)'/><rect x=92 y=412.5 width=466 height=17 fill='rgb(112,243,22)'/><rect x=92 y=430.5 width=466 height=17 fill='rgb(112,243,22)'/><rect x=129 y=125.5 width=1 height=322 fill='#c9c6c1' fill-opacity='0.55'/><rect x=168 y=125.5 width=1 height=322 fill='#c9c6c1' fill-opacity='0.55'/><rect x=207 y=125.5 width=1 height=322 fill='#c9c6c1' fill-opacity='0.55'/><rect x=246 y=125.5 width=1 height=322 fill='#c9c6c1' fill-opacity='0.55'/><rect x=285 y=125.5 width=1 height=322 fill='#c9c6c1' fill-opacity='0.55'/><rect x=324 y=125.5 width=1 height=322 fill='#c9c6c1' fill-opacity='0.55'/><rect x=363 y=125.5 width=1 height=322 fill='#c9c6c1' fill-opacity='0.55'/><rect x=402 y=125.5 width=1 height=322 fill='#c9c6c1' fill-opacity='0.55'/><rect x=441 y=125.5 width=1 height=322 fill='#c9c6c1' fill-opacity='0.55'/><rect x=480 y=125.5 width=1 height=322 fill='#c9c6c1' fill-opacity='0.55'/><rect x=519 y=125.5 width=1 height=322 fill='#c9c6c1' fill-opacity='0.55'/></svg>
<span class=x style='left:716.80px;top:587.26px;font-size:17.3px;color:#f6f2ee;letter-spacing:-0.532px;'>Load (%)</span>
<span class=x style='left:723.15px;top:963.96px;font-size:17.3px;color:#f6f2ee;letter-spacing:0.000px;transform:scaleX(0.8598);transform-origin:0 0;'>degrees</span>
<span class=x style='left:429.2px;top:835.7px;font-size:17.3px;color:#f6f2ee;transform-origin:0 0;transform:rotate(-90deg) scaleX(0.835)'>RPM (RPM)</span>
<svg class=b style='left:425px;top:509.0px' width=570 height=475 viewBox='0 -0.5 570 475'><g fill='none' stroke='#000' stroke-width='1.1' stroke-linejoin='round'><use href='#d0' x='107.30' y='104.60'/><use href='#d1' x='141.30' y='104.60'/><use href='#d0' x='151.30' y='104.60'/><use href='#d2' x='180.30' y='104.60'/><use href='#d0' x='190.30' y='104.60'/><use href='#d3' x='219.30' y='104.60'/><use href='#d0' x='229.30' y='104.60'/><use href='#d4' x='258.30' y='104.60'/><use href='#d0' x='268.30' y='104.60'/><use href='#d5' x='297.30' y='104.60'/><use href='#d0' x='307.30' y='104.60'/><use href='#d6' x='336.30' y='104.60'/><use href='#d0' x='346.30' y='104.60'/><use href='#d7' x='375.30' y='104.60'/><use href='#d0' x='385.30' y='104.60'/><use href='#d8' x='414.30' y='104.60'/><use href='#d0' x='424.30' y='104.60'/><use href='#d9' x='453.30' y='104.60'/><use href='#d0' x='463.30' y='104.60'/><use href='#d1' x='487.30' y='104.60'/><use href='#d0' x='497.30' y='104.60'/><use href='#d0' x='507.30' y='104.60'/><use href='#d2' x='526.30' y='104.60'/><use href='#d6' x='536.30' y='104.60'/><use href='#d0' x='546.30' y='104.60'/><use href='#d0' x='52.10' y='128.20'/><use href='#d0' x='107.30' y='128.20' stroke='#fff'/><use href='#d0' x='146.30' y='128.20'/><use href='#d0' x='185.30' y='128.20'/><use href='#d0' x='224.30' y='128.20'/><use href='#d0' x='263.30' y='128.20'/><use href='#d0' x='302.30' y='128.20'/><use href='#d0' x='341.30' y='128.20'/><use href='#d0' x='380.30' y='128.20'/><use href='#d0' x='419.30' y='128.20'/><use href='#d0' x='458.30' y='128.20'/><use href='#d0' x='497.30' y='128.20'/><use href='#d0' x='536.30' y='128.20'/><use href='#d5' x='42.10' y='146.20'/><use href='#d0' x='52.10' y='146.20'/><use href='#d0' x='62.10' y='146.20'/><use href='#d0' x='107.30' y='146.20'/><use href='#d0' x='146.30' y='146.20'/><use href='#d0' x='185.30' y='146.20'/><use href='#d0' x='224.30' y='146.20'/><use href='#d0' x='263.30' y='146.20'/><use href='#d0' x='302.30' y='146.20'/><use href='#d0' x='341.30' y='146.20'/><use href='#d0' x='380.30' y='146.20'/><use href='#d0' x='419.30' y='146.20'/><use href='#d0' x='458.30' y='146.20'/><use href='#d0' x='497.30' y='146.20'/><use href='#d0' x='536.30' y='146.20'/><use href='#d7' x='42.10' y='164.20'/><use href='#d5' x='52.10' y='164.20'/><use href='#d0' x='62.10' y='164.20'/><use href='#d0' x='107.30' y='164.20'/><use href='#d0' x='146.30' y='164.20'/><use href='#d0' x='185.30' y='164.20'/><use href='#d0' x='224.30' y='164.20'/><use href='#d0' x='263.30' y='164.20'/><use href='#d0' x='302.30' y='164.20'/><use href='#d0' x='341.30' y='164.20'/><use href='#d0' x='380.30' y='164.20'/><use href='#d0' x='419.30' y='164.20'/><use href='#d0' x='458.30' y='164.20'/><use href='#d0' x='497.30' y='164.20'/><use href='#d0' x='536.30' y='164.20'/><use href='#d1' x='37.10' y='182.20'/><use href='#d0' x='47.10' y='182.20'/><use href='#d0' x='57.10' y='182.20'/><use href='#d0' x='67.10' y='182.20'/><use href='#d0' x='107.30' y='182.20'/><use href='#d0' x='146.30' y='182.20'/><use href='#d0' x='185.30' y='182.20'/><use href='#d0' x='224.30' y='182.20'/><use href='#d0' x='263.30' y='182.20'/><use href='#d0' x='302.30' y='182.20'/><use href='#d0' x='341.30' y='182.20'/><use href='#d0' x='380.30' y='182.20'/><use href='#d0' x='419.30' y='182.20'/><use href='#d0' x='458.30' y='182.20'/><use href='#d0' x='497.30' y='182.20'/><use href='#d0' x='536.30' y='182.20'/><use href='#d1' x='37.10' y='200.20'/><use href='#d2' x='47.10' y='200.20'/><use href='#d5' x='57.10' y='200.20'/><use href='#d0' x='67.10' y='200.20'/><use href='#d0' x='107.30' y='200.20'/><use href='#d0' x='146.30' y='200.20'/><use href='#d0' x='185.30' y='200.20'/><use href='#d0' x='224.30' y='200.20'/><use href='#d0' x='263.30' y='200.20'/><use href='#d0' x='302.30' y='200.20'/><use href='#d0' x='341.30' y='200.20'/><use href='#d0' x='380.30' y='200.20'/><use href='#d0' x='419.30' y='200.20'/><use href='#d0' x='458.30' y='200.20'/><use href='#d0' x='497.30' y='200.20'/><use href='#d0' x='536.30' y='200.20'/><use href='#d1' x='37.10' y='218.20'/><use href='#d5' x='47.10' y='218.20'/><use href='#d0' x='57.10' y='218.20'/><use href='#d0' x='67.10' y='218.20'/><use href='#d0' x='107.30' y='218.20'/><use href='#d0' x='146.30' y='218.20'/><use href='#d0' x='185.30' y='218.20'/><use href='#d0' x='224.30' y='218.20'/><use href='#d6' x='263.30' y='218.20'/><use href='#d6' x='302.30' y='218.20'/><use href='#d4' x='341.30' y='218.20'/><use href='#d0' x='380.30' y='218.20'/><use href='#d0' x='419.30' y='218.20'/><use href='#d0' x='458.30' y='218.20'/><use href='#d0' x='497.30' y='218.20'/><use href='#d0' x='536.30' y='218.20'/><use href='#d2' x='37.10' y='236.20'/><use href='#d0' x='47.10' y='236.20'/><use href='#d0' x='57.10' y='236.20'/><use href='#d0' x='67.10' y='236.20'/><use href='#d0' x='107.30' y='236.20'/><use href='#d0' x='146.30' y='236.20'/><use href='#d0' x='185.30' y='236.20'/><use href='#d6' x='224.30' y='236.20'/><use href='#d6' x='263.30' y='236.20'/><use href='#d6' x='302.30' y='236.20'/><use href='#d4' x='341.30' y='236.20'/><use href='#d0' x='380.30' y='236.20'/><use href='#d0' x='419.30' y='236.20'/><use href='#d0' x='458.30' y='236.20'/><use href='#d0' x='497.30' y='236.20'/><use href='#d0' x='536.30' y='236.20'/><use href='#d2' x='37.10' y='254.20'/><use href='#d5' x='47.10' y='254.20'/><use href='#d0' x='57.10' y='254.20'/><use href='#d0' x='67.10' y='254.20'/><use href='#d0' x='107.30' y='254.20'/><use href='#d0' x='146.30' y='254.20'/><use href='#d0' x='185.30' y='254.20'/><use href='#d6' x='224.30' y='254.20'/><use href='#d6' x='263.30' y='254.20'/><use href='#d5' x='302.30' y='254.20'/><use href='#d4' x='341.30' y='254.20'/><use href='#d0' x='380.30' y='254.20'/><use href='#d0' x='419.30' y='254.20'/><use href='#d0' x='458.30' y='254.20'/><use href='#d0' x='497.30' y='254.20'/><use href='#d0' x='536.30' y='254.20'/><use href='#d3' x='37.10' y='272.20'/><use href='#d0' x='47.10' y='272.20'/><use href='#d0' x='57.10' y='272.20'/><use href='#d0' x='67.10' y='272.20'/><use href='#d0' x='107.30' y='272.20'/><use href='#d0' x='146.30' y='272.20'/><use href='#d0' x='185.30' y='272.20'/><use href='#d6' x='224.30' y='272.20'/><use href='#d6' x='263.30' y='272.20'/><use href='#d4' x='302.30' y='272.20'/><use href='#d3' x='341.30' y='272.20'/><use href='#d0' x='380.30' y='272.20'/><use href='#d0' x='419.30' y='272.20'/><use href='#d0' x='458.30' y='272.20'/><use href='#d0' x='497.30' y='272.20'/><use href='#d0' x='536.30' y='272.20'/><use href='#d3' x='37.10' y='290.20'/><use href='#d5' x='47.10' y='290.20'/><use href='#d0' x='57.10' y='290.20'/><use href='#d0' x='67.10' y='290.20'/><use href='#d0' x='107.30' y='290.20'/><use href='#d0' x='146.30' y='290.20'/><use href='#d0' x='185.30' y='290.20'/><use href='#d6' x='224.30' y='290.20'/><use href='#d5' x='263.30' y='290.20'/><use href='#d4' x='302.30' y='290.20'/><use href='#d2' x='341.30' y='290.20'/><use href='#d0' x='380.30' y='290.20'/><use href='#d0' x='419.30' y='290.20'/><use href='#d0' x='458.30' y='290.20'/><use href='#d0' x='497.30' y='290.20'/><use href='#d0' x='536.30' y='290.20'/><use href='#d4' x='37.10' y='308.20'/><use href='#d0' x='47.10' y='308.20'/><use href='#d0' x='57.10' y='308.20'/><use href='#d0' x='67.10' y='308.20'/><use href='#d0' x='107.30' y='308.20'/><use href='#d0' x='146.30' y='308.20'/><use href='#d0' x='185.30' y='308.20'/><use href='#d6' x='224.30' y='308.20'/><use href='#d4' x='263.30' y='308.20'/><use href='#d4' x='302.30' y='308.20'/><use href='#d2' x='341.30' y='308.20'/><use href='#d0' x='380.30' y='308.20'/><use href='#d0' x='419.30' y='308.20'/><use href='#d0' x='458.30' y='308.20'/><use href='#d0' x='497.30' y='308.20'/><use href='#d0' x='536.30' y='308.20'/><use href='#d4' x='37.10' y='326.20'/><use href='#d5' x='47.10' y='326.20'/><use href='#d0' x='57.10' y='326.20'/><use href='#d0' x='67.10' y='326.20'/><use href='#d0' x='107.30' y='326.20'/><use href='#d0' x='146.30' y='326.20'/><use href='#d0' x='185.30' y='326.20'/><use href='#d0' x='224.30' y='326.20'/><use href='#d0' x='263.30' y='326.20'/><use href='#d0' x='302.30' y='326.20'/><use href='#d0' x='341.30' y='326.20'/><use href='#d0' x='380.30' y='326.20'/><use href='#d0' x='419.30' y='326.20'/><use href='#d0' x='458.30' y='326.20'/><use href='#d0' x='497.30' y='326.20'/><use href='#d0' x='536.30' y='326.20'/><use href='#d5' x='37.10' y='344.20'/><use href='#d0' x='47.10' y='344.20'/><use href='#d0' x='57.10' y='344.20'/><use href='#d0' x='67.10' y='344.20'/><use href='#d0' x='107.30' y='344.20'/><use href='#d0' x='146.30' y='344.20'/><use href='#d0' x='185.30' y='344.20'/><use href='#d0' x='224.30' y='344.20'/><use href='#d0' x='263.30' y='344.20'/><use href='#d0' x='302.30' y='344.20'/><use href='#d0' x='341.30' y='344.20'/><use href='#d0' x='380.30' y='344.20'/><use href='#d0' x='419.30' y='344.20'/><use href='#d0' x='458.30' y='344.20'/><use href='#d0' x='497.30' y='344.20'/><use href='#d0' x='536.30' y='344.20'/><use href='#d5' x='37.10' y='362.20'/><use href='#d5' x='47.10' y='362.20'/><use href='#d0' x='57.10' y='362.20'/><use href='#d0' x='67.10' y='362.20'/><use href='#d0' x='107.30' y='362.20'/><use href='#d0' x='146.30' y='362.20'/><use href='#d0' x='185.30' y='362.20'/><use href='#d0' x='224.30' y='362.20'/><use href='#d0' x='263.30' y='362.20'/><use href='#d0' x='302.30' y='362.20'/><use href='#d0' x='341.30' y='362.20'/><use href='#d0' x='380.30' y='362.20'/><use href='#d0' x='419.30' y='362.20'/><use href='#d0' x='458.30' y='362.20'/><use href='#d0' x='497.30' y='362.20'/><use href='#d0' x='536.30' y='362.20'/><use href='#d6' x='37.10' y='380.20'/><use href='#d0' x='47.10' y='380.20'/><use href='#d0' x='57.10' y='380.20'/><use href='#d0' x='67.10' y='380.20'/><use href='#d0' x='107.30' y='380.20'/><use href='#d0' x='146.30' y='380.20'/><use href='#d0' x='185.30' y='380.20'/><use href='#d0' x='224.30' y='380.20'/><use href='#d0' x='263.30' y='380.20'/><use href='#d0' x='302.30' y='380.20'/><use href='#d0' x='341.30' y='380.20'/><use href='#d0' x='380.30' y='380.20'/><use href='#d0' x='419.30' y='380.20'/><use href='#d0' x='458.30' y='380.20'/><use href='#d0' x='497.30' y='380.20'/><use href='#d0' x='536.30' y='380.20'/><use href='#d6' x='37.10' y='398.20'/><use href='#d5' x='47.10' y='398.20'/><use href='#d0' x='57.10' y='398.20'/><use href='#d0' x='67.10' y='398.20'/><use href='#d0' x='107.30' y='398.20'/><use href='#d0' x='146.30' y='398.20'/><use href='#d0' x='185.30' y='398.20'/><use href='#d0' x='224.30' y='398.20'/><use href='#d0' x='263.30' y='398.20'/><use href='#d0' x='302.30' y='398.20'/><use href='#d0' x='341.30' y='398.20'/><use href='#d0' x='380.30' y='398.20'/><use href='#d0' x='419.30' y='398.20'/><use href='#d0' x='458.30' y='398.20'/><use href='#d0' x='497.30' y='398.20'/><use href='#d0' x='536.30' y='398.20'/><use href='#d7' x='37.10' y='416.20'/><use href='#d0' x='47.10' y='416.20'/><use href='#d0' x='57.10' y='416.20'/><use href='#d0' x='67.10' y='416.20'/><use href='#d0' x='107.30' y='416.20'/><use href='#d0' x='146.30' y='416.20'/><use href='#d0' x='185.30' y='416.20'/><use href='#d0' x='224.30' y='416.20'/><use href='#d0' x='263.30' y='416.20'/><use href='#d0' x='302.30' y='416.20'/><use href='#d0' x='341.30' y='416.20'/><use href='#d0' x='380.30' y='416.20'/><use href='#d0' x='419.30' y='416.20'/><use href='#d0' x='458.30' y='416.20'/><use href='#d0' x='497.30' y='416.20'/><use href='#d0' x='536.30' y='416.20'/><use href='#d1' x='32.10' y='434.20'/><use href='#d1' x='42.10' y='434.20'/><use href='#d0' x='52.10' y='434.20'/><use href='#d0' x='62.10' y='434.20'/><use href='#d0' x='72.10' y='434.20'/><use href='#d0' x='107.30' y='434.20'/><use href='#d0' x='146.30' y='434.20'/><use href='#d0' x='185.30' y='434.20'/><use href='#d0' x='224.30' y='434.20'/><use href='#d0' x='263.30' y='434.20'/><use href='#d0' x='302.30' y='434.20'/><use href='#d0' x='341.30' y='434.20'/><use href='#d0' x='380.30' y='434.20'/><use href='#d0' x='419.30' y='434.20'/><use href='#d0' x='458.30' y='434.20'/><use href='#d0' x='497.30' y='434.20'/><use href='#d0' x='536.30' y='434.20'/></g></svg>
</body></html>
